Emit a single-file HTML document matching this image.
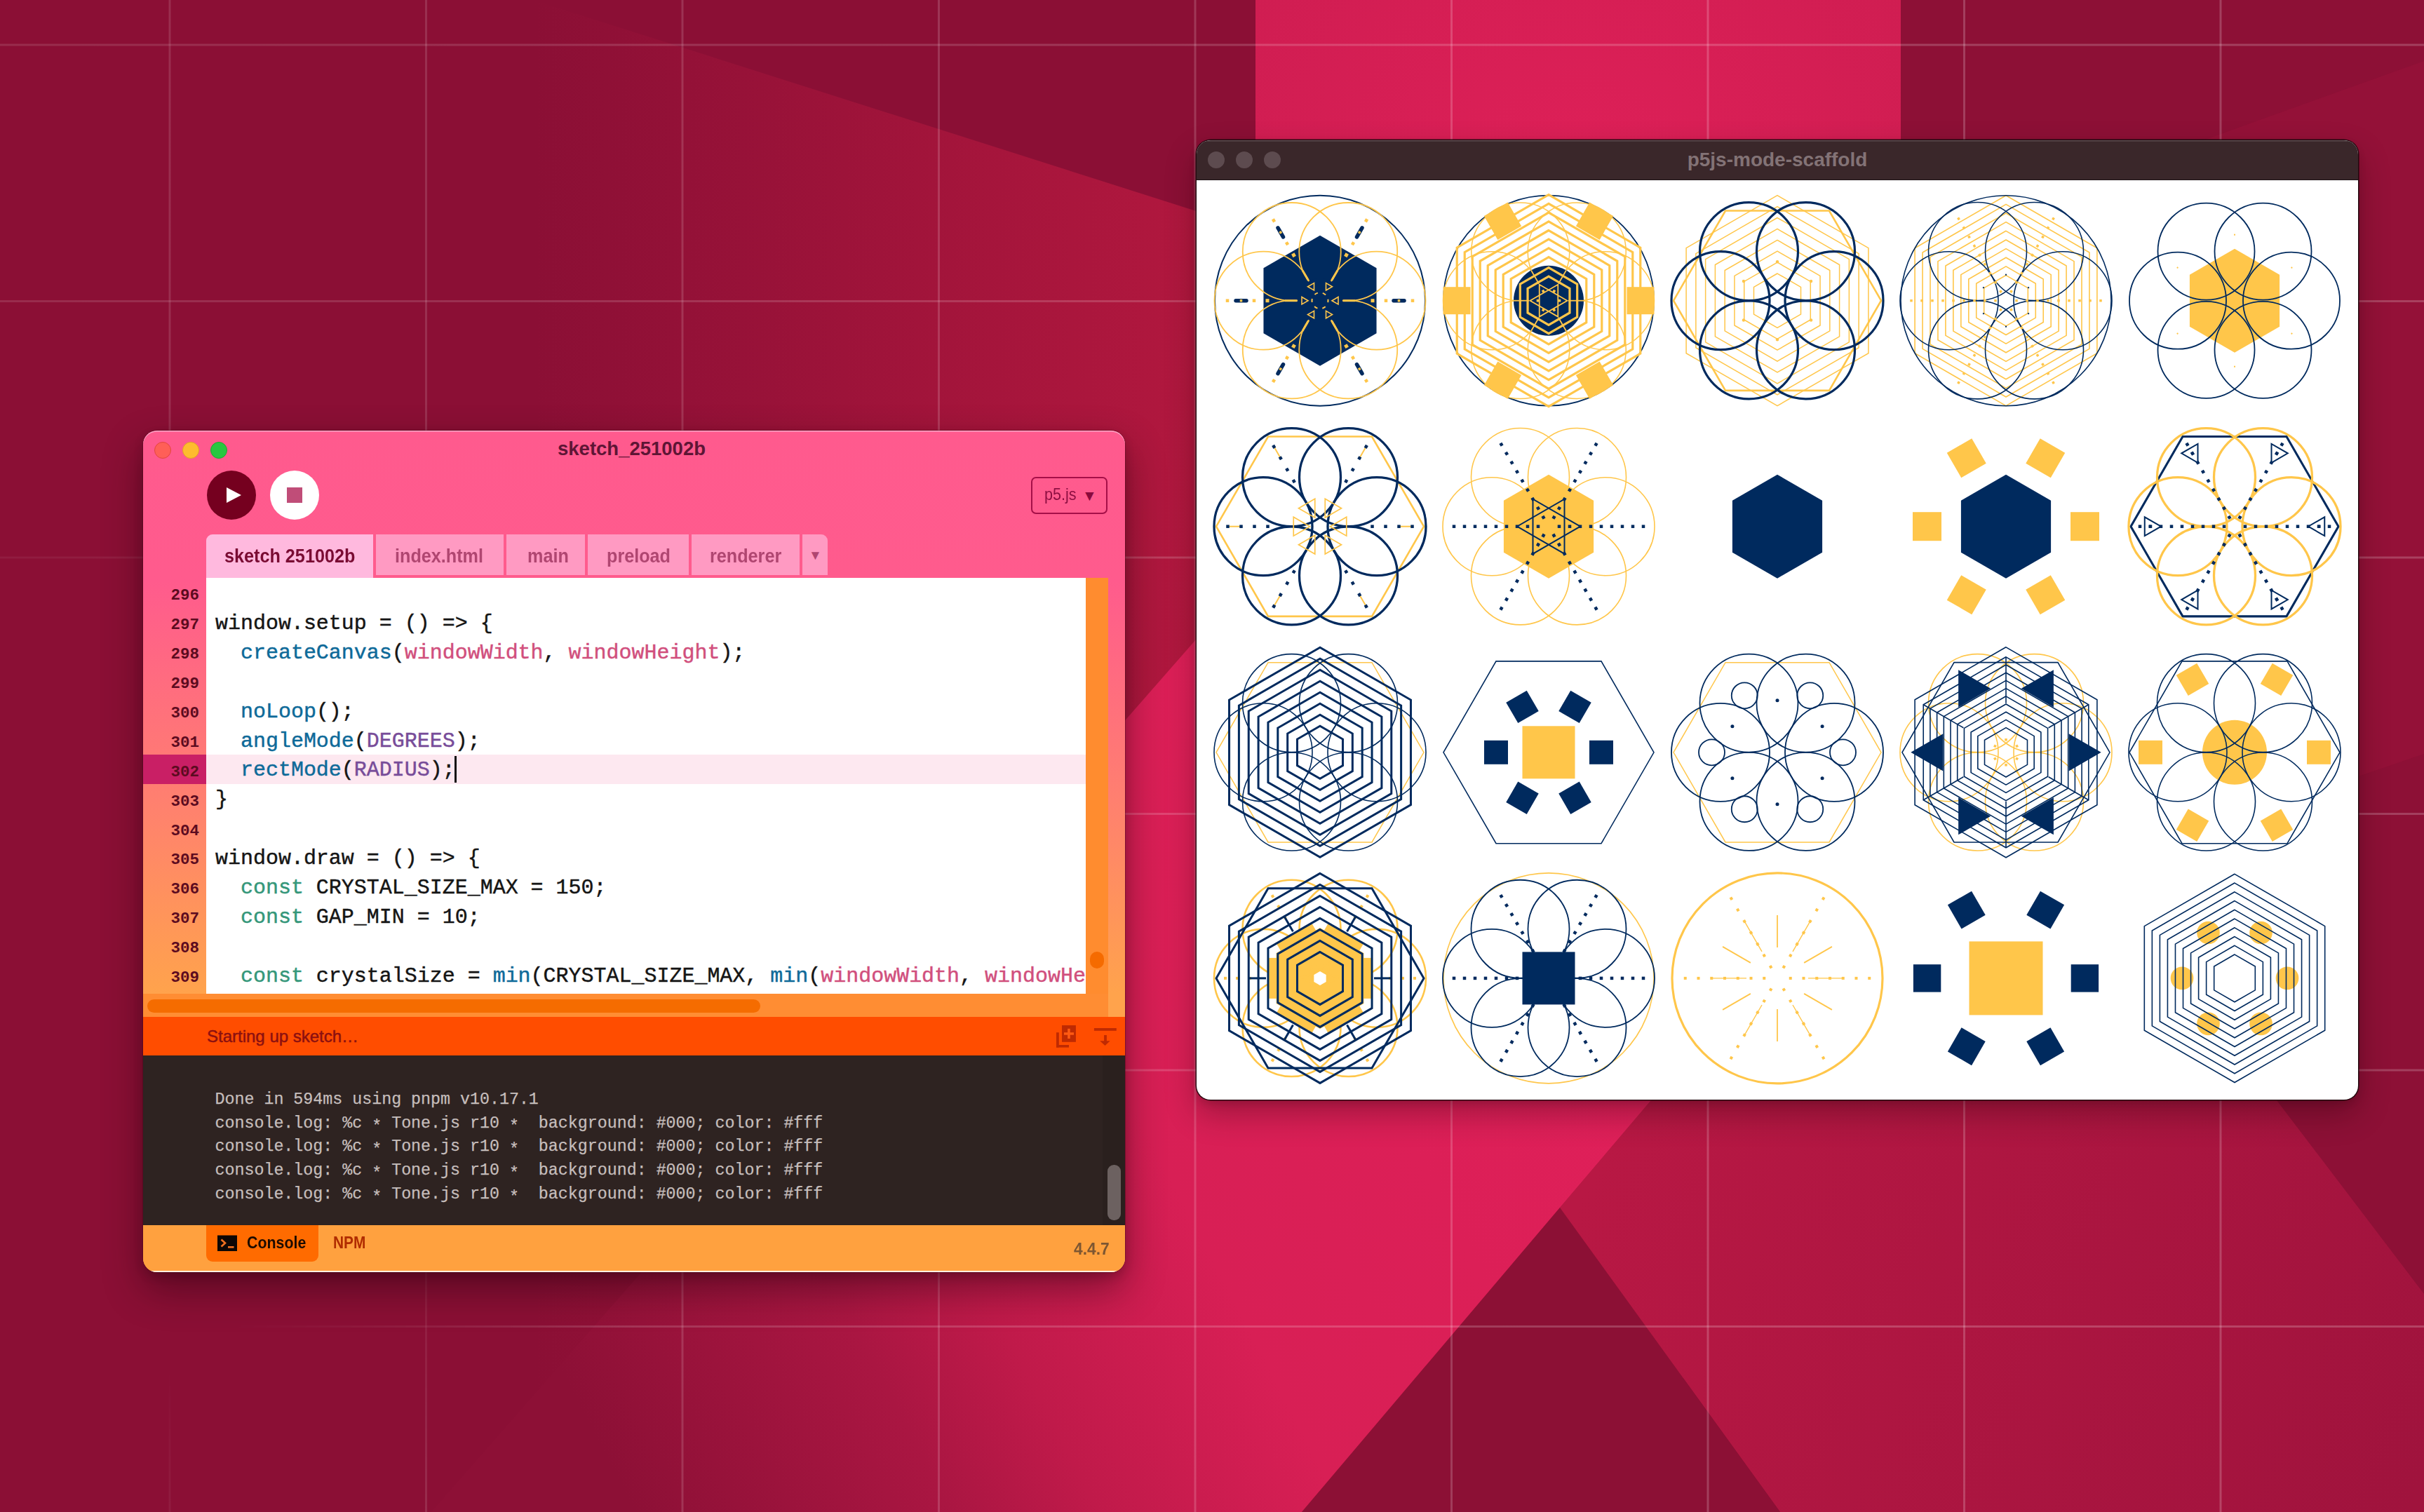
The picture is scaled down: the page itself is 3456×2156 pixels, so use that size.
<!DOCTYPE html><html><head><meta charset="utf-8"><style>
html,body{margin:0;padding:0;width:3456px;height:2156px;overflow:hidden;background:#8b0f35;}
</style></head><body>
<svg width="3456" height="2156" viewBox="0 0 3456 2156" style="position:absolute;left:0;top:0">
<defs>
<linearGradient id="gA" x1="760" y1="0" x2="1750" y2="0" gradientUnits="userSpaceOnUse">
 <stop offset="0" stop-color="#8b0f35"/><stop offset="1" stop-color="#b3183f"/></linearGradient>
<linearGradient id="gB" x1="850" y1="2050" x2="2300" y2="1300" gradientUnits="userSpaceOnUse">
 <stop offset="0" stop-color="#8d1036"/><stop offset="0.245" stop-color="#aa1642"/><stop offset="0.36" stop-color="#c01a4a"/><stop offset="0.55" stop-color="#d81f55"/><stop offset="0.75" stop-color="#dc1f57"/><stop offset="1" stop-color="#e0205a"/></linearGradient>
<radialGradient id="gTop" cx="2250" cy="260" r="750" gradientUnits="userSpaceOnUse">
 <stop offset="0" stop-color="#de2058"/><stop offset="1" stop-color="#ca1c4f"/></radialGradient>
<linearGradient id="gR" x1="2300" y1="1600" x2="3456" y2="2100" gradientUnits="userSpaceOnUse">
 <stop offset="0" stop-color="#b81844"/><stop offset="1" stop-color="#a0133d"/></linearGradient>
<linearGradient id="gmx" x1="0" y1="0" x2="2600" y2="0" gradientUnits="userSpaceOnUse"><stop offset="0" stop-color="#999"/><stop offset="1" stop-color="#fff"/></linearGradient><radialGradient id="gm" cx="0" cy="1500" r="1000" gradientUnits="userSpaceOnUse"><stop offset="0.5" stop-color="#000" stop-opacity="1"/><stop offset="0.95" stop-color="#000" stop-opacity="0"/></radialGradient><mask id="gridmask" maskUnits="userSpaceOnUse" x="0" y="0" width="3456" height="2156"><rect width="3456" height="2156" fill="url(#gmx)"/><rect width="3456" height="2156" fill="url(#gm)"/></mask>
</defs>
<rect width="3456" height="2156" fill="#8b0f35"/>
<polygon points="760,0 2400,522 2400,2156 760,2156" fill="url(#gA)"/>
<polygon points="615,2156 2329,200 3000,200 3000,1300 2354,1569 2224,1722 1856,2156" fill="url(#gB)"/>
<polygon points="1790,0 2710,0 2710,330 1790,330" fill="url(#gTop)"/>
<polygon points="2710,0 3456,0 3456,1845 3246,1569 2710,1569" fill="#8d1036"/>
<polygon points="2710,355 3456,87 3456,1075 2710,1330" fill="#941138"/>
<polygon points="2354,1569 3246,1569 3456,1845 3456,2156 2538,2156 2224,1722" fill="url(#gR)"/>
<polygon points="1856,2156 2224,1722 2538,2156" fill="#8c1035"/>
<g fill="#ffffff" fill-opacity="0.2" mask="url(#gridmask)"><rect x="240.5" y="0" width="3" height="2156"/><rect x="606.0" y="0" width="3" height="2156"/><rect x="971.5" y="0" width="3" height="2156"/><rect x="1337.0" y="0" width="3" height="2156"/><rect x="1702.5" y="0" width="3" height="2156"/><rect x="2068.0" y="0" width="3" height="2156"/><rect x="2433.5" y="0" width="3" height="2156"/><rect x="2799.0" y="0" width="3" height="2156"/><rect x="3164.5" y="0" width="3" height="2156"/><rect x="0" y="62.5" width="3456" height="3"/><rect x="0" y="428.0" width="3456" height="3"/><rect x="0" y="793.5" width="3456" height="3"/><rect x="0" y="1159.0" width="3456" height="3"/><rect x="0" y="1524.5" width="3456" height="3"/><rect x="0" y="1890.0" width="3456" height="3"/></g>
</svg>
<div style="position:absolute;left:204px;top:614px;width:1400px;height:1200px;border-radius:20px;overflow:hidden;background:linear-gradient(to bottom,#ff5a8e 0px,#ff5b8d 215px,#ff7f70 520px,#ffa34c 803px);box-shadow:inset 0 1.5px 0 rgba(255,200,225,0.7), 0 24px 55px 0px rgba(30,0,10,0.45), 0 6px 14px rgba(30,0,10,0.18), 0 0 0 1px rgba(80,10,30,0.35);">
<div style="position:absolute;left:16.0px;top:16.0px;width:24.0px;height:24.0px;background:#ff5f57;border-radius:50%;box-sizing:border-box;border:1px solid #e2463f;"></div>
<div style="position:absolute;left:56.0px;top:16.0px;width:24.0px;height:24.0px;background:#febc2e;border-radius:50%;box-sizing:border-box;border:1px solid #e0a028;"></div>
<div style="position:absolute;left:96.0px;top:16.0px;width:24.0px;height:24.0px;background:#28c840;border-radius:50%;box-sizing:border-box;border:1px solid #1eaa32;"></div>
<div style="position:absolute;left:591.0px;top:11.1px;font-family:'Liberation Sans', sans-serif;font-size:27.5px;line-height:30.72px;font-weight:bold;color:#5e1535;white-space:pre;">sketch_251002b</div>
<div style="position:absolute;left:91.0px;top:57.0px;width:70.0px;height:70.0px;background:#75001f;border-radius:50%;box-sizing:border-box;"></div>
<div style="position:absolute;left:181.0px;top:57.0px;width:70.0px;height:70.0px;background:#ffffff;border-radius:50%;box-sizing:border-box;"></div>
<svg style="position:absolute;left:0;top:0" width="300" height="150"><polygon points="119,81 140,92 119,103" fill="#fff"/><rect x="205" y="81" width="22" height="22" fill="#c04d78"/></svg>
<div style="position:absolute;left:1266.0px;top:66.0px;width:109.0px;height:53.0px;background:transparent;border:2.5px solid #a50f48;border-radius:7px;box-sizing:border-box;"></div>
<div style="position:absolute;left:1285.0px;top:78.3px;font-family:'Liberation Sans', sans-serif;font-size:24px;line-height:26.81px;font-weight:normal;color:#8e0f42;white-space:pre;transform:scaleX(0.9);transform-origin:0 0;">p5.js</div>
<div style="position:absolute;left:1339.0px;top:81.0px;font-family:'Liberation Sans', sans-serif;font-size:21px;line-height:23.46px;font-weight:normal;color:#8a0a3c;white-space:pre;">▼</div>
<div style="position:absolute;left:90.0px;top:148.0px;width:238.0px;height:62.0px;background:#ffb9de;border-top-left-radius:9px;"></div>
<div style="position:absolute;left:116.0px;top:162.7px;font-family:'Liberation Sans', sans-serif;font-size:28px;line-height:31.28px;font-weight:bold;color:#7a0b33;white-space:pre;transform:scaleX(0.9);transform-origin:0 0;">sketch 251002b</div>
<div style="position:absolute;left:332.0px;top:148.0px;width:182.0px;height:58.0px;background:#ff9ac2;"></div>
<div style="position:absolute;left:359.1px;top:162.7px;font-family:'Liberation Sans', sans-serif;font-size:28px;line-height:31.28px;font-weight:bold;color:#b04671;white-space:pre;transform:scaleX(0.9);transform-origin:0 0;">index.html</div>
<div style="position:absolute;left:518.0px;top:148.0px;width:112.0px;height:58.0px;background:#ff9ac2;"></div>
<div style="position:absolute;left:548.4px;top:162.7px;font-family:'Liberation Sans', sans-serif;font-size:28px;line-height:31.28px;font-weight:bold;color:#b04671;white-space:pre;transform:scaleX(0.9);transform-origin:0 0;">main</div>
<div style="position:absolute;left:634.0px;top:148.0px;width:144.0px;height:58.0px;background:#ff9ac2;"></div>
<div style="position:absolute;left:661.3px;top:162.7px;font-family:'Liberation Sans', sans-serif;font-size:28px;line-height:31.28px;font-weight:bold;color:#b04671;white-space:pre;transform:scaleX(0.9);transform-origin:0 0;">preload</div>
<div style="position:absolute;left:782.0px;top:148.0px;width:154.0px;height:58.0px;background:#ff9ac2;"></div>
<div style="position:absolute;left:807.9px;top:162.7px;font-family:'Liberation Sans', sans-serif;font-size:28px;line-height:31.28px;font-weight:bold;color:#b04671;white-space:pre;transform:scaleX(0.9);transform-origin:0 0;">renderer</div>
<div style="position:absolute;left:940.0px;top:148.0px;width:36.0px;height:58.0px;background:#ff9ac2;border-top-right-radius:9px;"></div>
<div style="position:absolute;left:949.0px;top:166.8px;font-family:'Liberation Sans', sans-serif;font-size:19px;line-height:21.22px;font-weight:normal;color:#b04671;white-space:pre;">▼</div>
<div style="position:absolute;left:90.0px;top:210.0px;width:1254.0px;height:593.0px;background:#ffffff;overflow:hidden;"></div>
<div style="position:absolute;left:90.0px;top:462.0px;width:1254.0px;height:42.0px;background:#fde8f0;"></div>
<div style="position:absolute;left:0.0px;top:462.0px;width:90.0px;height:42.0px;background:#c91f65;"></div>
<div style="position:absolute;left:39.5px;top:223.3px;font-family:'Liberation Mono', monospace;font-size:22.5px;line-height:25.49px;font-weight:bold;color:#5c0b20;white-space:pre;">296</div>
<div style="position:absolute;left:39.5px;top:265.2px;font-family:'Liberation Mono', monospace;font-size:22.5px;line-height:25.49px;font-weight:bold;color:#5c0b20;white-space:pre;">297</div>
<div style="position:absolute;left:39.5px;top:307.1px;font-family:'Liberation Mono', monospace;font-size:22.5px;line-height:25.49px;font-weight:bold;color:#5c0b20;white-space:pre;">298</div>
<div style="position:absolute;left:39.5px;top:349.0px;font-family:'Liberation Mono', monospace;font-size:22.5px;line-height:25.49px;font-weight:bold;color:#5c0b20;white-space:pre;">299</div>
<div style="position:absolute;left:39.5px;top:390.9px;font-family:'Liberation Mono', monospace;font-size:22.5px;line-height:25.49px;font-weight:bold;color:#5c0b20;white-space:pre;">300</div>
<div style="position:absolute;left:39.5px;top:432.8px;font-family:'Liberation Mono', monospace;font-size:22.5px;line-height:25.49px;font-weight:bold;color:#5c0b20;white-space:pre;">301</div>
<div style="position:absolute;left:39.5px;top:474.7px;font-family:'Liberation Mono', monospace;font-size:22.5px;line-height:25.49px;font-weight:bold;color:#5c0b20;white-space:pre;">302</div>
<div style="position:absolute;left:39.5px;top:516.6px;font-family:'Liberation Mono', monospace;font-size:22.5px;line-height:25.49px;font-weight:bold;color:#5c0b20;white-space:pre;">303</div>
<div style="position:absolute;left:39.5px;top:558.5px;font-family:'Liberation Mono', monospace;font-size:22.5px;line-height:25.49px;font-weight:bold;color:#5c0b20;white-space:pre;">304</div>
<div style="position:absolute;left:39.5px;top:600.4px;font-family:'Liberation Mono', monospace;font-size:22.5px;line-height:25.49px;font-weight:bold;color:#5c0b20;white-space:pre;">305</div>
<div style="position:absolute;left:39.5px;top:642.3px;font-family:'Liberation Mono', monospace;font-size:22.5px;line-height:25.49px;font-weight:bold;color:#5c0b20;white-space:pre;">306</div>
<div style="position:absolute;left:39.5px;top:684.2px;font-family:'Liberation Mono', monospace;font-size:22.5px;line-height:25.49px;font-weight:bold;color:#5c0b20;white-space:pre;">307</div>
<div style="position:absolute;left:39.5px;top:726.1px;font-family:'Liberation Mono', monospace;font-size:22.5px;line-height:25.49px;font-weight:bold;color:#5c0b20;white-space:pre;">308</div>
<div style="position:absolute;left:39.5px;top:768.0px;font-family:'Liberation Mono', monospace;font-size:22.5px;line-height:25.49px;font-weight:bold;color:#5c0b20;white-space:pre;">309</div>
<div style="position:absolute;left:90px;top:210px;width:1254px;height:593px;overflow:hidden;"><div style="position:absolute;left:13.0px;top:48.9px;font-family:'Liberation Mono', monospace;font-size:29.97px;line-height:33.95px;font-weight:normal;color:#151515;white-space:pre;-webkit-text-stroke:0.45px currentColor;">window.setup = () =&gt; {</div><div style="position:absolute;left:13.0px;top:90.8px;font-family:'Liberation Mono', monospace;font-size:29.97px;line-height:33.95px;font-weight:normal;color:#151515;white-space:pre;-webkit-text-stroke:0.45px currentColor;">  <span style="color:#0e6a99">createCanvas</span>(<span style="color:#d14f7d">windowWidth</span>, <span style="color:#d14f7d">windowHeight</span>);</div><div style="position:absolute;left:13.0px;top:174.6px;font-family:'Liberation Mono', monospace;font-size:29.97px;line-height:33.95px;font-weight:normal;color:#151515;white-space:pre;-webkit-text-stroke:0.45px currentColor;">  <span style="color:#0e6a99">noLoop</span>();</div><div style="position:absolute;left:13.0px;top:216.5px;font-family:'Liberation Mono', monospace;font-size:29.97px;line-height:33.95px;font-weight:normal;color:#151515;white-space:pre;-webkit-text-stroke:0.45px currentColor;">  <span style="color:#0e6a99">angleMode</span>(<span style="color:#784c99">DEGREES</span>);</div><div style="position:absolute;left:13.0px;top:258.4px;font-family:'Liberation Mono', monospace;font-size:29.97px;line-height:33.95px;font-weight:normal;color:#151515;white-space:pre;-webkit-text-stroke:0.45px currentColor;">  <span style="color:#0e6a99">rectMode</span>(<span style="color:#784c99">RADIUS</span>);</div><div style="position:absolute;left:13.0px;top:300.3px;font-family:'Liberation Mono', monospace;font-size:29.97px;line-height:33.95px;font-weight:normal;color:#151515;white-space:pre;-webkit-text-stroke:0.45px currentColor;">}</div><div style="position:absolute;left:13.0px;top:384.1px;font-family:'Liberation Mono', monospace;font-size:29.97px;line-height:33.95px;font-weight:normal;color:#151515;white-space:pre;-webkit-text-stroke:0.45px currentColor;">window.draw = () =&gt; {</div><div style="position:absolute;left:13.0px;top:426.0px;font-family:'Liberation Mono', monospace;font-size:29.97px;line-height:33.95px;font-weight:normal;color:#151515;white-space:pre;-webkit-text-stroke:0.45px currentColor;">  <span style="color:#35977a">const</span> CRYSTAL_SIZE_MAX = 150;</div><div style="position:absolute;left:13.0px;top:467.9px;font-family:'Liberation Mono', monospace;font-size:29.97px;line-height:33.95px;font-weight:normal;color:#151515;white-space:pre;-webkit-text-stroke:0.45px currentColor;">  <span style="color:#35977a">const</span> GAP_MIN = 10;</div><div style="position:absolute;left:13.0px;top:551.7px;font-family:'Liberation Mono', monospace;font-size:29.97px;line-height:33.95px;font-weight:normal;color:#151515;white-space:pre;-webkit-text-stroke:0.45px currentColor;">  <span style="color:#35977a">const</span> crystalSize = <span style="color:#0e6a99">min</span>(CRYSTAL_SIZE_MAX, <span style="color:#0e6a99">min</span>(<span style="color:#d14f7d">windowWidth</span>, <span style="color:#d14f7d">windowHeight</span>));</div></div>
<div style="position:absolute;left:444.0px;top:464.0px;width:2.5px;height:38.0px;background:#111;"></div>
<div style="position:absolute;left:1344.0px;top:210.0px;width:32.0px;height:593.0px;background:#ff8c2f;"></div>
<div style="position:absolute;left:1350.0px;top:743.0px;width:20.0px;height:24.0px;background:#f56b00;border-radius:10px;"></div>
<div style="position:absolute;left:0.0px;top:803.0px;width:1376.0px;height:33.0px;background:#ff8d33;"></div>
<div style="position:absolute;left:6.0px;top:811.0px;width:874.0px;height:19.0px;background:#f56c00;border-radius:10px;"></div>
<div style="position:absolute;left:0.0px;top:836.0px;width:1400.0px;height:55.0px;background:#ff4d00;"></div>
<div style="position:absolute;left:91.0px;top:851.3px;font-family:'Liberation Sans', sans-serif;font-size:24px;line-height:26.81px;font-weight:normal;color:#8c1010;white-space:pre;-webkit-text-stroke:0.5px #8c1010;">Starting up sketch…</div>
<svg style="position:absolute;left:1294px;top:846px" width="100" height="40"><g fill="#bf2a02"><rect x="8" y="12.2" width="3.8" height="21.4"/><rect x="8" y="30" width="18" height="3.6"/><rect x="16" y="2" width="19.9" height="23.8"/><rect x="61.9" y="6" width="31.9" height="3.8"/><rect x="76.1" y="16" width="3.8" height="9.6"/><polygon points="70.2,24.2 84.7,24.2 77.5,31"/></g><rect x="19" y="12.2" width="14" height="3.5" fill="#ff5a12"/><rect x="24.2" y="6.8" width="3.5" height="14.2" fill="#ff5a12"/></svg>
<div style="position:absolute;left:0.0px;top:891.0px;width:1400.0px;height:242.0px;background:#2e2321;"></div>
<div style="position:absolute;left:1368.0px;top:891.0px;width:32.0px;height:242.0px;background:#2a201e;"></div>
<div style="position:absolute;left:102.5px;top:940.6px;font-family:'Liberation Mono', monospace;font-size:23.3px;line-height:26.39px;font-weight:normal;color:#c6bebc;white-space:pre;-webkit-text-stroke:0.25px #c6bebc;">Done in 594ms using pnpm v10.17.1</div>
<div style="position:absolute;left:102.5px;top:974.5px;font-family:'Liberation Mono', monospace;font-size:23.3px;line-height:26.39px;font-weight:normal;color:#c6bebc;white-space:pre;-webkit-text-stroke:0.25px #c6bebc;">console.log: %c <span style="position:relative;top:5px">*</span> Tone.js r10 <span style="position:relative;top:5px">*</span>  background: #000; color: #fff</div>
<div style="position:absolute;left:102.5px;top:1008.3px;font-family:'Liberation Mono', monospace;font-size:23.3px;line-height:26.39px;font-weight:normal;color:#c6bebc;white-space:pre;-webkit-text-stroke:0.25px #c6bebc;">console.log: %c <span style="position:relative;top:5px">*</span> Tone.js r10 <span style="position:relative;top:5px">*</span>  background: #000; color: #fff</div>
<div style="position:absolute;left:102.5px;top:1042.2px;font-family:'Liberation Mono', monospace;font-size:23.3px;line-height:26.39px;font-weight:normal;color:#c6bebc;white-space:pre;-webkit-text-stroke:0.25px #c6bebc;">console.log: %c <span style="position:relative;top:5px">*</span> Tone.js r10 <span style="position:relative;top:5px">*</span>  background: #000; color: #fff</div>
<div style="position:absolute;left:102.5px;top:1076.0px;font-family:'Liberation Mono', monospace;font-size:23.3px;line-height:26.39px;font-weight:normal;color:#c6bebc;white-space:pre;-webkit-text-stroke:0.25px #c6bebc;">console.log: %c <span style="position:relative;top:5px">*</span> Tone.js r10 <span style="position:relative;top:5px">*</span>  background: #000; color: #fff</div>
<div style="position:absolute;left:1375.0px;top:1047.0px;width:18.5px;height:79.0px;background:#6c6160;border-radius:9px;"></div>
<div style="position:absolute;left:0.0px;top:1133.0px;width:1400.0px;height:67.0px;background:#ffa13f;"></div>
<div style="position:absolute;left:90.0px;top:1133.0px;width:160.0px;height:52.0px;background:#ff6b00;border-bottom-left-radius:9px;border-bottom-right-radius:9px;"></div>
<svg style="position:absolute;left:106px;top:1147px" width="30" height="26"><rect x="0" y="0.5" width="28" height="22.5" fill="#0d0705"/><path d="M5.5 6.5 l5.5 5 l-5.5 5" fill="none" stroke="#f07020" stroke-width="2.6"/><rect x="15" y="16" width="8.5" height="2.6" fill="#f07020"/></svg>
<div style="position:absolute;left:148.0px;top:1145.3px;font-family:'Liberation Sans', sans-serif;font-size:24px;line-height:26.81px;font-weight:bold;color:#1c0b00;white-space:pre;transform:scaleX(0.89);transform-origin:0 0;">Console</div>
<div style="position:absolute;left:270.5px;top:1145.3px;font-family:'Liberation Sans', sans-serif;font-size:24px;line-height:26.81px;font-weight:bold;color:#b02c00;white-space:pre;transform:scaleX(0.87);transform-origin:0 0;">NPM</div>
<div style="position:absolute;left:1327.0px;top:1154.3px;font-family:'Liberation Sans', sans-serif;font-size:24px;line-height:26.81px;font-weight:bold;color:#7d5632;white-space:pre;transform:scaleX(0.95);transform-origin:0 0;">4.4.7</div>
<div style="position:absolute;left:0.0px;top:1197.5px;width:1400.0px;height:2.5px;background:rgba(255,245,235,0.95);"></div>
</div>
<div style="position:absolute;left:1706px;top:200px;width:1656px;height:1368px;border-radius:20px;overflow:hidden;background:#ffffff;box-shadow:0 20px 45px 0px rgba(30,0,10,0.32), 0 5px 12px rgba(30,0,10,0.15), 0 0 0 1.5px rgba(20,10,12,0.85);">
<div style="position:absolute;left:0;top:0;width:1656px;height:57px;background:#3a272a;border-bottom:1.5px solid #1e1416;box-sizing:border-box;box-shadow:inset 0 1.5px 0 rgba(255,255,255,0.18);"></div>
<div style="position:absolute;left:16px;top:16px;width:24px;height:24px;border-radius:50%;background:#5d4b4f;"></div>
<div style="position:absolute;left:56px;top:16px;width:24px;height:24px;border-radius:50%;background:#5d4b4f;"></div>
<div style="position:absolute;left:96px;top:16px;width:24px;height:24px;border-radius:50%;background:#5d4b4f;"></div>
<div style="position:absolute;left:0;top:0;width:1656px;text-align:center;font-family:&quot;Liberation Sans&quot;,sans-serif;font-weight:bold;font-size:28px;line-height:31.3px;color:#837376;padding-top:12px;">p5js-mode-scaffold</div>
<svg style="position:absolute;left:0;top:0" width="1656" height="1368" viewBox="1706 200 1656 1368">
<circle cx="1882" cy="428.7" r="150" fill="none" stroke="#002a5e" stroke-width="2"/>
<polygon points="1882,335.7 1801.46,382.2 1801.46,475.2 1882,521.7 1962.54,475.2 1962.54,382.2" fill="#002a5e"/>
<circle cx="1962.5" cy="428.7" r="70" fill="none" stroke="#ffc64a" stroke-width="1.8"/><circle cx="1922.25" cy="358.98" r="70" fill="none" stroke="#ffc64a" stroke-width="1.8"/><circle cx="1841.75" cy="358.98" r="70" fill="none" stroke="#ffc64a" stroke-width="1.8"/><circle cx="1801.5" cy="428.7" r="70" fill="none" stroke="#ffc64a" stroke-width="1.8"/><circle cx="1841.75" cy="498.42" r="70" fill="none" stroke="#ffc64a" stroke-width="1.8"/><circle cx="1922.25" cy="498.42" r="70" fill="none" stroke="#ffc64a" stroke-width="1.8"/>
<rect x="1973.75" y="426.45" width="4.5" height="4.5" fill="#ffc64a" transform="rotate(-0 1976 428.7)"/><rect x="2011.75" y="426.45" width="4.5" height="4.5" fill="#ffc64a" transform="rotate(-0 2014 428.7)"/><rect x="1926.75" y="345.04" width="4.5" height="4.5" fill="#ffc64a" transform="rotate(-60 1929 347.29)"/><rect x="1945.75" y="312.13" width="4.5" height="4.5" fill="#ffc64a" transform="rotate(-60 1948 314.38)"/><rect x="1832.75" y="345.04" width="4.5" height="4.5" fill="#ffc64a" transform="rotate(-120 1835 347.29)"/><rect x="1813.75" y="312.13" width="4.5" height="4.5" fill="#ffc64a" transform="rotate(-120 1816 314.38)"/><rect x="1785.75" y="426.45" width="4.5" height="4.5" fill="#ffc64a" transform="rotate(-180 1788 428.7)"/><rect x="1747.75" y="426.45" width="4.5" height="4.5" fill="#ffc64a" transform="rotate(-180 1750 428.7)"/><rect x="1832.75" y="507.86" width="4.5" height="4.5" fill="#ffc64a" transform="rotate(-240 1835 510.11)"/><rect x="1813.75" y="540.77" width="4.5" height="4.5" fill="#ffc64a" transform="rotate(-240 1816 543.02)"/><rect x="1926.75" y="507.86" width="4.5" height="4.5" fill="#ffc64a" transform="rotate(-300 1929 510.11)"/><rect x="1945.75" y="540.77" width="4.5" height="4.5" fill="#ffc64a" transform="rotate(-300 1948 543.02)"/>
<line x1="1987" y1="428.7" x2="2002" y2="428.7" stroke="#002a5e" stroke-width="5.5" stroke-linecap="round"/><line x1="1934.5" y1="337.77" x2="1942" y2="324.78" stroke="#002a5e" stroke-width="5.5" stroke-linecap="round"/><line x1="1829.5" y1="337.77" x2="1822" y2="324.78" stroke="#002a5e" stroke-width="5.5" stroke-linecap="round"/><line x1="1777" y1="428.7" x2="1762" y2="428.7" stroke="#002a5e" stroke-width="5.5" stroke-linecap="round"/><line x1="1829.5" y1="519.63" x2="1822" y2="532.62" stroke="#002a5e" stroke-width="5.5" stroke-linecap="round"/><line x1="1934.5" y1="519.63" x2="1942" y2="532.62" stroke="#002a5e" stroke-width="5.5" stroke-linecap="round"/>
<rect x="1992.75" y="426.95" width="3.5" height="3.5" fill="#ffc64a" transform="rotate(-0 1994.5 428.7)"/><rect x="1936.5" y="329.52" width="3.5" height="3.5" fill="#ffc64a" transform="rotate(-60 1938.25 331.27)"/><rect x="1824" y="329.52" width="3.5" height="3.5" fill="#ffc64a" transform="rotate(-120 1825.75 331.27)"/><rect x="1767.75" y="426.95" width="3.5" height="3.5" fill="#ffc64a" transform="rotate(-180 1769.5 428.7)"/><rect x="1824" y="524.38" width="3.5" height="3.5" fill="#ffc64a" transform="rotate(-240 1825.75 526.13)"/><rect x="1936.5" y="524.38" width="3.5" height="3.5" fill="#ffc64a" transform="rotate(-300 1938.25 526.13)"/>
<rect x="1954.5" y="426.2" width="5" height="5" fill="#ffc64a" transform="rotate(-0 1957 428.7)"/><rect x="1917" y="361.25" width="5" height="5" fill="#ffc64a" transform="rotate(-60 1919.5 363.75)"/><rect x="1842" y="361.25" width="5" height="5" fill="#ffc64a" transform="rotate(-120 1844.5 363.75)"/><rect x="1804.5" y="426.2" width="5" height="5" fill="#ffc64a" transform="rotate(-180 1807 428.7)"/><rect x="1842" y="491.15" width="5" height="5" fill="#ffc64a" transform="rotate(-240 1844.5 493.65)"/><rect x="1917" y="491.15" width="5" height="5" fill="#ffc64a" transform="rotate(-300 1919.5 493.65)"/>
<line x1="1915" y1="428.7" x2="1932" y2="428.7" stroke="#ffc64a" stroke-width="3" stroke-linecap="butt"/><line x1="1898.5" y1="400.12" x2="1907" y2="385.4" stroke="#ffc64a" stroke-width="3" stroke-linecap="butt"/><line x1="1865.5" y1="400.12" x2="1857" y2="385.4" stroke="#ffc64a" stroke-width="3" stroke-linecap="butt"/><line x1="1849" y1="428.7" x2="1832" y2="428.7" stroke="#ffc64a" stroke-width="3" stroke-linecap="butt"/><line x1="1865.5" y1="457.28" x2="1857" y2="472" stroke="#ffc64a" stroke-width="3" stroke-linecap="butt"/><line x1="1898.5" y1="457.28" x2="1907" y2="472" stroke="#ffc64a" stroke-width="3" stroke-linecap="butt"/>
<circle cx="1882" cy="428.7" r="32" fill="#002a5e"/>
<polygon points="1899,428.7 1908,433.9 1908,423.5" fill="none" stroke="#ffc64a" stroke-width="1.6" stroke-linejoin="miter"/><polygon points="1890.5,413.98 1899.5,408.78 1890.5,403.59" fill="none" stroke="#ffc64a" stroke-width="1.6" stroke-linejoin="miter"/><polygon points="1873.5,413.98 1873.5,403.59 1864.5,408.78" fill="none" stroke="#ffc64a" stroke-width="1.6" stroke-linejoin="miter"/><polygon points="1865,428.7 1856,423.5 1856,433.9" fill="none" stroke="#ffc64a" stroke-width="1.6" stroke-linejoin="miter"/><polygon points="1873.5,443.42 1864.5,448.62 1873.5,453.81" fill="none" stroke="#ffc64a" stroke-width="1.6" stroke-linejoin="miter"/><polygon points="1890.5,443.42 1890.5,453.81 1899.5,448.62" fill="none" stroke="#ffc64a" stroke-width="1.6" stroke-linejoin="miter"/>
<circle cx="1882" cy="428.7" r="11.5" fill="none" stroke="#ffc64a" stroke-width="2" stroke-dasharray="5 7.04" stroke-dashoffset="2.5"/>
<circle cx="2208" cy="428.7" r="150" fill="none" stroke="#002a5e" stroke-width="1.8"/>
<circle cx="2288.5" cy="428.7" r="70" fill="none" stroke="#ffc64a" stroke-width="1.5"/><circle cx="2248.25" cy="358.98" r="70" fill="none" stroke="#ffc64a" stroke-width="1.5"/><circle cx="2167.75" cy="358.98" r="70" fill="none" stroke="#ffc64a" stroke-width="1.5"/><circle cx="2127.5" cy="428.7" r="70" fill="none" stroke="#ffc64a" stroke-width="1.5"/><circle cx="2167.75" cy="498.42" r="70" fill="none" stroke="#ffc64a" stroke-width="1.5"/><circle cx="2248.25" cy="498.42" r="70" fill="none" stroke="#ffc64a" stroke-width="1.5"/>
<polygon points="2208,277.7 2077.23,353.2 2077.23,504.2 2208,579.7 2338.77,504.2 2338.77,353.2" fill="none" stroke="#ffc64a" stroke-width="3.2" stroke-linejoin="miter"/>
<polygon points="2208,290.4 2088.23,359.55 2088.23,497.85 2208,567 2327.77,497.85 2327.77,359.55" fill="none" stroke="#ffc64a" stroke-width="3.2" stroke-linejoin="miter"/>
<polygon points="2208,303.1 2099.23,365.9 2099.23,491.5 2208,554.3 2316.77,491.5 2316.77,365.9" fill="none" stroke="#ffc64a" stroke-width="3.2" stroke-linejoin="miter"/>
<polygon points="2208,315.8 2110.23,372.25 2110.23,485.15 2208,541.6 2305.77,485.15 2305.77,372.25" fill="none" stroke="#ffc64a" stroke-width="3.2" stroke-linejoin="miter"/>
<polygon points="2208,328.5 2121.22,378.6 2121.22,478.8 2208,528.9 2294.78,478.8 2294.78,378.6" fill="none" stroke="#ffc64a" stroke-width="3.2" stroke-linejoin="miter"/>
<polygon points="2208,341.2 2132.22,384.95 2132.22,472.45 2208,516.2 2283.78,472.45 2283.78,384.95" fill="none" stroke="#ffc64a" stroke-width="3.2" stroke-linejoin="miter"/>
<polygon points="2208,353.9 2143.22,391.3 2143.22,466.1 2208,503.5 2272.78,466.1 2272.78,391.3" fill="none" stroke="#ffc64a" stroke-width="3.2" stroke-linejoin="miter"/>
<polygon points="2208,366.6 2154.22,397.65 2154.22,459.75 2208,490.8 2261.78,459.75 2261.78,397.65" fill="none" stroke="#ffc64a" stroke-width="3.2" stroke-linejoin="miter"/>
<circle cx="2208" cy="428.7" r="50" fill="#002a5e"/>
<line x1="2236" y1="428.7" x2="2258" y2="428.7" stroke="#ffc64a" stroke-width="1.8" stroke-linecap="butt"/><line x1="2222" y1="404.45" x2="2233" y2="385.4" stroke="#ffc64a" stroke-width="1.8" stroke-linecap="butt"/><line x1="2194" y1="404.45" x2="2183" y2="385.4" stroke="#ffc64a" stroke-width="1.8" stroke-linecap="butt"/><line x1="2180" y1="428.7" x2="2158" y2="428.7" stroke="#ffc64a" stroke-width="1.8" stroke-linecap="butt"/><line x1="2194" y1="452.95" x2="2183" y2="472" stroke="#ffc64a" stroke-width="1.8" stroke-linecap="butt"/><line x1="2222" y1="452.95" x2="2233" y2="472" stroke="#ffc64a" stroke-width="1.8" stroke-linecap="butt"/>
<polygon points="2208,381.7 2167.3,405.2 2167.3,452.2 2208,475.7 2248.7,452.2 2248.7,405.2" fill="none" stroke="#ffc64a" stroke-width="3.2" stroke-linejoin="miter"/>
<polygon points="2208,394.1 2178.04,411.4 2178.04,446 2208,463.3 2237.96,446 2237.96,411.4" fill="none" stroke="#ffc64a" stroke-width="3.2" stroke-linejoin="miter"/>
<polygon points="2234.5,428.7 2194.75,405.75 2194.75,451.65" fill="none" stroke="#ffc64a" stroke-width="1.8" stroke-linejoin="miter"/>
<polygon points="2181.5,428.7 2221.25,451.65 2221.25,405.75" fill="none" stroke="#ffc64a" stroke-width="1.8" stroke-linejoin="miter"/>
<rect x="2221.7" y="426.9" width="3.6" height="3.6" fill="#ffc64a" transform="rotate(-0 2223.5 428.7)"/><rect x="2213.95" y="413.48" width="3.6" height="3.6" fill="#ffc64a" transform="rotate(-60 2215.75 415.28)"/><rect x="2198.45" y="413.48" width="3.6" height="3.6" fill="#ffc64a" transform="rotate(-120 2200.25 415.28)"/><rect x="2190.7" y="426.9" width="3.6" height="3.6" fill="#ffc64a" transform="rotate(-180 2192.5 428.7)"/><rect x="2198.45" y="440.32" width="3.6" height="3.6" fill="#ffc64a" transform="rotate(-240 2200.25 442.12)"/><rect x="2213.95" y="440.32" width="3.6" height="3.6" fill="#ffc64a" transform="rotate(-300 2215.75 442.12)"/>
<rect x="2319.5" y="409.2" width="39" height="39" fill="#ffc64a" transform="rotate(0 2339 428.7)"/><rect x="2254" y="295.75" width="39" height="39" fill="#ffc64a" transform="rotate(-60 2273.5 315.25)"/><rect x="2123" y="295.75" width="39" height="39" fill="#ffc64a" transform="rotate(-120 2142.5 315.25)"/><rect x="2057.5" y="409.2" width="39" height="39" fill="#ffc64a" transform="rotate(-180 2077 428.7)"/><rect x="2123" y="522.65" width="39" height="39" fill="#ffc64a" transform="rotate(-240 2142.5 542.15)"/><rect x="2254" y="522.65" width="39" height="39" fill="#ffc64a" transform="rotate(-300 2273.5 542.15)"/>
<polygon points="2534,278.7 2404.1,353.7 2404.1,503.7 2534,578.7 2663.9,503.7 2663.9,353.7" fill="none" stroke="#ffc64a" stroke-width="1.5" stroke-linejoin="miter"/>
<polygon points="2534,294.6 2417.87,361.65 2417.87,495.75 2534,562.8 2650.13,495.75 2650.13,361.65" fill="none" stroke="#ffc64a" stroke-width="1.5" stroke-linejoin="miter"/>
<polygon points="2534,310.5 2431.64,369.6 2431.64,487.8 2534,546.9 2636.36,487.8 2636.36,369.6" fill="none" stroke="#ffc64a" stroke-width="1.5" stroke-linejoin="miter"/>
<polygon points="2534,326.4 2445.41,377.55 2445.41,479.85 2534,531 2622.59,479.85 2622.59,377.55" fill="none" stroke="#ffc64a" stroke-width="1.5" stroke-linejoin="miter"/>
<polygon points="2534,342.3 2459.18,385.5 2459.18,471.9 2534,515.1 2608.82,471.9 2608.82,385.5" fill="none" stroke="#ffc64a" stroke-width="1.5" stroke-linejoin="miter"/>
<polygon points="2534,358.2 2472.95,393.45 2472.95,463.95 2534,499.2 2595.05,463.95 2595.05,393.45" fill="none" stroke="#ffc64a" stroke-width="1.5" stroke-linejoin="miter"/>
<polygon points="2534,374.1 2486.72,401.4 2486.72,456 2534,483.3 2581.28,456 2581.28,401.4" fill="none" stroke="#ffc64a" stroke-width="1.5" stroke-linejoin="miter"/>
<polygon points="2534,390 2500.48,409.35 2500.48,448.05 2534,467.4 2567.52,448.05 2567.52,409.35" fill="none" stroke="#ffc64a" stroke-width="1.5" stroke-linejoin="miter"/>
<polygon points="2682,428.7 2608,300.53 2460,300.53 2386,428.7 2460,556.87 2608,556.87" fill="none" stroke="#ffc64a" stroke-width="2.6" stroke-linejoin="miter"/>
<circle cx="2615" cy="428.7" r="70" fill="none" stroke="#002a5e" stroke-width="3.2"/><circle cx="2574.5" cy="358.55" r="70" fill="none" stroke="#002a5e" stroke-width="3.2"/><circle cx="2493.5" cy="358.55" r="70" fill="none" stroke="#002a5e" stroke-width="3.2"/><circle cx="2453" cy="428.7" r="70" fill="none" stroke="#002a5e" stroke-width="3.2"/><circle cx="2493.5" cy="498.85" r="70" fill="none" stroke="#002a5e" stroke-width="3.2"/><circle cx="2574.5" cy="498.85" r="70" fill="none" stroke="#002a5e" stroke-width="3.2"/>
<circle cx="2582.06" cy="400.95" r="2.2" fill="#ffc64a"/><circle cx="2534" cy="373.2" r="2.2" fill="#ffc64a"/><circle cx="2485.94" cy="400.95" r="2.2" fill="#ffc64a"/><circle cx="2485.94" cy="456.45" r="2.2" fill="#ffc64a"/><circle cx="2534" cy="484.2" r="2.2" fill="#ffc64a"/><circle cx="2582.06" cy="456.45" r="2.2" fill="#ffc64a"/>
<polygon points="2860,278.7 2730.1,353.7 2730.1,503.7 2860,578.7 2989.9,503.7 2989.9,353.7" fill="none" stroke="#ffc64a" stroke-width="1.6" stroke-linejoin="miter"/>
<polygon points="2860,291.35 2741.05,360.02 2741.05,497.38 2860,566.05 2978.95,497.38 2978.95,360.02" fill="none" stroke="#ffc64a" stroke-width="1.6" stroke-linejoin="miter"/>
<polygon points="2860,304 2752.01,366.35 2752.01,491.05 2860,553.4 2967.99,491.05 2967.99,366.35" fill="none" stroke="#ffc64a" stroke-width="1.6" stroke-linejoin="miter"/>
<polygon points="2860,316.65 2762.96,372.68 2762.96,484.73 2860,540.75 2957.04,484.73 2957.04,372.68" fill="none" stroke="#ffc64a" stroke-width="1.6" stroke-linejoin="miter"/>
<polygon points="2860,329.3 2773.92,379 2773.92,478.4 2860,528.1 2946.08,478.4 2946.08,379" fill="none" stroke="#ffc64a" stroke-width="1.6" stroke-linejoin="miter"/>
<polygon points="2860,341.95 2784.87,385.32 2784.87,472.07 2860,515.45 2935.13,472.08 2935.13,385.32" fill="none" stroke="#ffc64a" stroke-width="1.6" stroke-linejoin="miter"/>
<polygon points="2860,354.6 2795.83,391.65 2795.83,465.75 2860,502.8 2924.17,465.75 2924.17,391.65" fill="none" stroke="#ffc64a" stroke-width="1.6" stroke-linejoin="miter"/>
<polygon points="2860,367.25 2806.78,397.97 2806.78,459.43 2860,490.15 2913.22,459.43 2913.22,397.97" fill="none" stroke="#ffc64a" stroke-width="1.6" stroke-linejoin="miter"/>
<polygon points="2860,379.9 2817.74,404.3 2817.74,453.1 2860,477.5 2902.26,453.1 2902.26,404.3" fill="none" stroke="#ffc64a" stroke-width="1.6" stroke-linejoin="miter"/>
<polygon points="2860,392.55 2828.69,410.62 2828.69,446.77 2860,464.85 2891.31,446.77 2891.31,410.62" fill="none" stroke="#ffc64a" stroke-width="1.6" stroke-linejoin="miter"/>
<circle cx="2860" cy="428.7" r="150" fill="none" stroke="#002a5e" stroke-width="1.6"/>
<circle cx="2941" cy="428.7" r="70" fill="none" stroke="#002a5e" stroke-width="1.6"/><circle cx="2900.5" cy="358.55" r="70" fill="none" stroke="#002a5e" stroke-width="1.6"/><circle cx="2819.5" cy="358.55" r="70" fill="none" stroke="#002a5e" stroke-width="1.6"/><circle cx="2779" cy="428.7" r="70" fill="none" stroke="#002a5e" stroke-width="1.6"/><circle cx="2819.5" cy="498.85" r="70" fill="none" stroke="#002a5e" stroke-width="1.6"/><circle cx="2900.5" cy="498.85" r="70" fill="none" stroke="#002a5e" stroke-width="1.6"/>
<rect x="2888.25" y="426.95" width="3.5" height="3.5" fill="#ffc64a" transform="rotate(-0 2890 428.7)"/><rect x="2903.25" y="426.95" width="3.5" height="3.5" fill="#ffc64a" transform="rotate(-0 2905 428.7)"/><rect x="2918.25" y="426.95" width="3.5" height="3.5" fill="#ffc64a" transform="rotate(-0 2920 428.7)"/><rect x="2933.25" y="426.95" width="3.5" height="3.5" fill="#ffc64a" transform="rotate(-0 2935 428.7)"/><rect x="2948.25" y="426.95" width="3.5" height="3.5" fill="#ffc64a" transform="rotate(-0 2950 428.7)"/><rect x="2963.25" y="426.95" width="3.5" height="3.5" fill="#ffc64a" transform="rotate(-0 2965 428.7)"/><rect x="2978.25" y="426.95" width="3.5" height="3.5" fill="#ffc64a" transform="rotate(-0 2980 428.7)"/><rect x="2993.25" y="426.95" width="3.5" height="3.5" fill="#ffc64a" transform="rotate(-0 2995 428.7)"/><rect x="2873.25" y="400.97" width="3.5" height="3.5" fill="#ffc64a" transform="rotate(-60 2875 402.72)"/><rect x="2880.75" y="387.98" width="3.5" height="3.5" fill="#ffc64a" transform="rotate(-60 2882.5 389.73)"/><rect x="2888.25" y="374.99" width="3.5" height="3.5" fill="#ffc64a" transform="rotate(-60 2890 376.74)"/><rect x="2895.75" y="362" width="3.5" height="3.5" fill="#ffc64a" transform="rotate(-60 2897.5 363.75)"/><rect x="2903.25" y="349.01" width="3.5" height="3.5" fill="#ffc64a" transform="rotate(-60 2905 350.76)"/><rect x="2910.75" y="336.02" width="3.5" height="3.5" fill="#ffc64a" transform="rotate(-60 2912.5 337.77)"/><rect x="2918.25" y="323.03" width="3.5" height="3.5" fill="#ffc64a" transform="rotate(-60 2920 324.78)"/><rect x="2925.75" y="310.04" width="3.5" height="3.5" fill="#ffc64a" transform="rotate(-60 2927.5 311.79)"/><rect x="2843.25" y="400.97" width="3.5" height="3.5" fill="#ffc64a" transform="rotate(-120 2845 402.72)"/><rect x="2835.75" y="387.98" width="3.5" height="3.5" fill="#ffc64a" transform="rotate(-120 2837.5 389.73)"/><rect x="2828.25" y="374.99" width="3.5" height="3.5" fill="#ffc64a" transform="rotate(-120 2830 376.74)"/><rect x="2820.75" y="362" width="3.5" height="3.5" fill="#ffc64a" transform="rotate(-120 2822.5 363.75)"/><rect x="2813.25" y="349.01" width="3.5" height="3.5" fill="#ffc64a" transform="rotate(-120 2815 350.76)"/><rect x="2805.75" y="336.02" width="3.5" height="3.5" fill="#ffc64a" transform="rotate(-120 2807.5 337.77)"/><rect x="2798.25" y="323.03" width="3.5" height="3.5" fill="#ffc64a" transform="rotate(-120 2800 324.78)"/><rect x="2790.75" y="310.04" width="3.5" height="3.5" fill="#ffc64a" transform="rotate(-120 2792.5 311.79)"/><rect x="2828.25" y="426.95" width="3.5" height="3.5" fill="#ffc64a" transform="rotate(-180 2830 428.7)"/><rect x="2813.25" y="426.95" width="3.5" height="3.5" fill="#ffc64a" transform="rotate(-180 2815 428.7)"/><rect x="2798.25" y="426.95" width="3.5" height="3.5" fill="#ffc64a" transform="rotate(-180 2800 428.7)"/><rect x="2783.25" y="426.95" width="3.5" height="3.5" fill="#ffc64a" transform="rotate(-180 2785 428.7)"/><rect x="2768.25" y="426.95" width="3.5" height="3.5" fill="#ffc64a" transform="rotate(-180 2770 428.7)"/><rect x="2753.25" y="426.95" width="3.5" height="3.5" fill="#ffc64a" transform="rotate(-180 2755 428.7)"/><rect x="2738.25" y="426.95" width="3.5" height="3.5" fill="#ffc64a" transform="rotate(-180 2740 428.7)"/><rect x="2723.25" y="426.95" width="3.5" height="3.5" fill="#ffc64a" transform="rotate(-180 2725 428.7)"/><rect x="2843.25" y="452.93" width="3.5" height="3.5" fill="#ffc64a" transform="rotate(-240 2845 454.68)"/><rect x="2835.75" y="465.92" width="3.5" height="3.5" fill="#ffc64a" transform="rotate(-240 2837.5 467.67)"/><rect x="2828.25" y="478.91" width="3.5" height="3.5" fill="#ffc64a" transform="rotate(-240 2830 480.66)"/><rect x="2820.75" y="491.9" width="3.5" height="3.5" fill="#ffc64a" transform="rotate(-240 2822.5 493.65)"/><rect x="2813.25" y="504.89" width="3.5" height="3.5" fill="#ffc64a" transform="rotate(-240 2815 506.64)"/><rect x="2805.75" y="517.88" width="3.5" height="3.5" fill="#ffc64a" transform="rotate(-240 2807.5 519.63)"/><rect x="2798.25" y="530.87" width="3.5" height="3.5" fill="#ffc64a" transform="rotate(-240 2800 532.62)"/><rect x="2790.75" y="543.86" width="3.5" height="3.5" fill="#ffc64a" transform="rotate(-240 2792.5 545.61)"/><rect x="2873.25" y="452.93" width="3.5" height="3.5" fill="#ffc64a" transform="rotate(-300 2875 454.68)"/><rect x="2880.75" y="465.92" width="3.5" height="3.5" fill="#ffc64a" transform="rotate(-300 2882.5 467.67)"/><rect x="2888.25" y="478.91" width="3.5" height="3.5" fill="#ffc64a" transform="rotate(-300 2890 480.66)"/><rect x="2895.75" y="491.9" width="3.5" height="3.5" fill="#ffc64a" transform="rotate(-300 2897.5 493.65)"/><rect x="2903.25" y="504.89" width="3.5" height="3.5" fill="#ffc64a" transform="rotate(-300 2905 506.64)"/><rect x="2910.75" y="517.88" width="3.5" height="3.5" fill="#ffc64a" transform="rotate(-300 2912.5 519.63)"/><rect x="2918.25" y="530.87" width="3.5" height="3.5" fill="#ffc64a" transform="rotate(-300 2920 532.62)"/><rect x="2925.75" y="543.86" width="3.5" height="3.5" fill="#ffc64a" transform="rotate(-300 2927.5 545.61)"/>
<rect x="2891.04" y="409.2" width="2" height="2" fill="#002a5e" transform="rotate(-30 2892.04 410.2)"/><rect x="2859" y="390.7" width="2" height="2" fill="#002a5e" transform="rotate(-90 2860 391.7)"/><rect x="2826.96" y="409.2" width="2" height="2" fill="#002a5e" transform="rotate(-150 2827.96 410.2)"/><rect x="2826.96" y="446.2" width="2" height="2" fill="#002a5e" transform="rotate(-210 2827.96 447.2)"/><rect x="2859" y="464.7" width="2" height="2" fill="#002a5e" transform="rotate(-270 2860 465.7)"/><rect x="2891.04" y="446.2" width="2" height="2" fill="#002a5e" transform="rotate(-330 2892.04 447.2)"/>
<rect x="2873.25" y="426.95" width="3.5" height="3.5" fill="#ffc64a" transform="rotate(-0 2875 428.7)"/><rect x="2865.75" y="413.96" width="3.5" height="3.5" fill="#ffc64a" transform="rotate(-60 2867.5 415.71)"/><rect x="2850.75" y="413.96" width="3.5" height="3.5" fill="#ffc64a" transform="rotate(-120 2852.5 415.71)"/><rect x="2843.25" y="426.95" width="3.5" height="3.5" fill="#ffc64a" transform="rotate(-180 2845 428.7)"/><rect x="2850.75" y="439.94" width="3.5" height="3.5" fill="#ffc64a" transform="rotate(-240 2852.5 441.69)"/><rect x="2865.75" y="439.94" width="3.5" height="3.5" fill="#ffc64a" transform="rotate(-300 2867.5 441.69)"/>
<polygon points="3186,354.7 3121.91,391.7 3121.91,465.7 3186,502.7 3250.09,465.7 3250.09,391.7" fill="#ffc64a"/>
<circle cx="3267" cy="428.7" r="69" fill="none" stroke="#002a5e" stroke-width="1.8"/><circle cx="3226.5" cy="358.55" r="69" fill="none" stroke="#002a5e" stroke-width="1.8"/><circle cx="3145.5" cy="358.55" r="69" fill="none" stroke="#002a5e" stroke-width="1.8"/><circle cx="3105" cy="428.7" r="69" fill="none" stroke="#002a5e" stroke-width="1.8"/><circle cx="3145.5" cy="498.85" r="69" fill="none" stroke="#002a5e" stroke-width="1.8"/><circle cx="3226.5" cy="498.85" r="69" fill="none" stroke="#002a5e" stroke-width="1.8"/>
<rect x="3266.41" y="380.7" width="2" height="2" fill="#ffc64a" transform="rotate(-30 3267.41 381.7)"/><rect x="3185" y="333.7" width="2" height="2" fill="#ffc64a" transform="rotate(-90 3186 334.7)"/><rect x="3103.59" y="380.7" width="2" height="2" fill="#ffc64a" transform="rotate(-150 3104.59 381.7)"/><rect x="3103.59" y="474.7" width="2" height="2" fill="#ffc64a" transform="rotate(-210 3104.59 475.7)"/><rect x="3185" y="521.7" width="2" height="2" fill="#ffc64a" transform="rotate(-270 3186 522.7)"/><rect x="3266.41" y="474.7" width="2" height="2" fill="#ffc64a" transform="rotate(-330 3267.41 475.7)"/>
<polygon points="2030,750.7 1956,622.53 1808,622.53 1734,750.7 1808,878.87 1956,878.87" fill="none" stroke="#ffc64a" stroke-width="2.6" stroke-linejoin="miter"/>
<line x1="1994.5" y1="750.7" x2="2013.5" y2="750.7" stroke="#ffc64a" stroke-width="2" stroke-linecap="butt"/><line x1="1938.25" y1="653.27" x2="1947.75" y2="636.82" stroke="#ffc64a" stroke-width="2" stroke-linecap="butt"/><line x1="1825.75" y1="653.27" x2="1816.25" y2="636.82" stroke="#ffc64a" stroke-width="2" stroke-linecap="butt"/><line x1="1769.5" y1="750.7" x2="1750.5" y2="750.7" stroke="#ffc64a" stroke-width="2" stroke-linecap="butt"/><line x1="1825.75" y1="848.13" x2="1816.25" y2="864.58" stroke="#ffc64a" stroke-width="2" stroke-linecap="butt"/><line x1="1938.25" y1="848.13" x2="1947.75" y2="864.58" stroke="#ffc64a" stroke-width="2" stroke-linecap="butt"/>
<rect x="1954.25" y="748.45" width="4.5" height="4.5" fill="#002a5e" transform="rotate(-0 1956.5 750.7)"/><rect x="1973.25" y="748.45" width="4.5" height="4.5" fill="#002a5e" transform="rotate(-0 1975.5 750.7)"/><rect x="1992.25" y="748.45" width="4.5" height="4.5" fill="#002a5e" transform="rotate(-0 1994.5 750.7)"/><rect x="2011.25" y="748.45" width="4.5" height="4.5" fill="#002a5e" transform="rotate(-0 2013.5 750.7)"/><rect x="1917" y="683.93" width="4.5" height="4.5" fill="#002a5e" transform="rotate(-60 1919.25 686.18)"/><rect x="1926.5" y="667.48" width="4.5" height="4.5" fill="#002a5e" transform="rotate(-60 1928.75 669.73)"/><rect x="1936" y="651.02" width="4.5" height="4.5" fill="#002a5e" transform="rotate(-60 1938.25 653.27)"/><rect x="1945.5" y="634.57" width="4.5" height="4.5" fill="#002a5e" transform="rotate(-60 1947.75 636.82)"/><rect x="1842.5" y="683.93" width="4.5" height="4.5" fill="#002a5e" transform="rotate(-120 1844.75 686.18)"/><rect x="1833" y="667.48" width="4.5" height="4.5" fill="#002a5e" transform="rotate(-120 1835.25 669.73)"/><rect x="1823.5" y="651.02" width="4.5" height="4.5" fill="#002a5e" transform="rotate(-120 1825.75 653.27)"/><rect x="1814" y="634.57" width="4.5" height="4.5" fill="#002a5e" transform="rotate(-120 1816.25 636.82)"/><rect x="1805.25" y="748.45" width="4.5" height="4.5" fill="#002a5e" transform="rotate(-180 1807.5 750.7)"/><rect x="1786.25" y="748.45" width="4.5" height="4.5" fill="#002a5e" transform="rotate(-180 1788.5 750.7)"/><rect x="1767.25" y="748.45" width="4.5" height="4.5" fill="#002a5e" transform="rotate(-180 1769.5 750.7)"/><rect x="1748.25" y="748.45" width="4.5" height="4.5" fill="#002a5e" transform="rotate(-180 1750.5 750.7)"/><rect x="1842.5" y="812.97" width="4.5" height="4.5" fill="#002a5e" transform="rotate(-240 1844.75 815.22)"/><rect x="1833" y="829.42" width="4.5" height="4.5" fill="#002a5e" transform="rotate(-240 1835.25 831.67)"/><rect x="1823.5" y="845.88" width="4.5" height="4.5" fill="#002a5e" transform="rotate(-240 1825.75 848.13)"/><rect x="1814" y="862.33" width="4.5" height="4.5" fill="#002a5e" transform="rotate(-240 1816.25 864.58)"/><rect x="1917" y="812.97" width="4.5" height="4.5" fill="#002a5e" transform="rotate(-300 1919.25 815.22)"/><rect x="1926.5" y="829.42" width="4.5" height="4.5" fill="#002a5e" transform="rotate(-300 1928.75 831.67)"/><rect x="1936" y="845.88" width="4.5" height="4.5" fill="#002a5e" transform="rotate(-300 1938.25 848.13)"/><rect x="1945.5" y="862.33" width="4.5" height="4.5" fill="#002a5e" transform="rotate(-300 1947.75 864.58)"/>
<circle cx="1963" cy="750.7" r="70" fill="none" stroke="#002a5e" stroke-width="3.3"/><circle cx="1922.5" cy="680.55" r="70" fill="none" stroke="#002a5e" stroke-width="3.3"/><circle cx="1841.5" cy="680.55" r="70" fill="none" stroke="#002a5e" stroke-width="3.3"/><circle cx="1801" cy="750.7" r="70" fill="none" stroke="#002a5e" stroke-width="3.3"/><circle cx="1841.5" cy="820.85" r="70" fill="none" stroke="#002a5e" stroke-width="3.3"/><circle cx="1922.5" cy="820.85" r="70" fill="none" stroke="#002a5e" stroke-width="3.3"/>
<polygon points="1896.5,750.7 1919.75,764.12 1919.75,737.28" fill="none" stroke="#ffc64a" stroke-width="1.7" stroke-linejoin="miter"/><polygon points="1889.25,738.14 1912.5,724.72 1889.25,711.3" fill="none" stroke="#ffc64a" stroke-width="1.7" stroke-linejoin="miter"/><polygon points="1874.75,738.14 1874.75,711.3 1851.5,724.72" fill="none" stroke="#ffc64a" stroke-width="1.7" stroke-linejoin="miter"/><polygon points="1867.5,750.7 1844.25,737.28 1844.25,764.12" fill="none" stroke="#ffc64a" stroke-width="1.7" stroke-linejoin="miter"/><polygon points="1874.75,763.26 1851.5,776.68 1874.75,790.1" fill="none" stroke="#ffc64a" stroke-width="1.7" stroke-linejoin="miter"/><polygon points="1889.25,763.26 1889.25,790.1 1912.5,776.68" fill="none" stroke="#ffc64a" stroke-width="1.7" stroke-linejoin="miter"/>
<polygon points="2208,676.7 2143.91,713.7 2143.91,787.7 2208,824.7 2272.09,787.7 2272.09,713.7" fill="#ffc64a"/>
<circle cx="2289" cy="750.7" r="70" fill="none" stroke="#ffc64a" stroke-width="1.6"/><circle cx="2248.5" cy="680.55" r="70" fill="none" stroke="#ffc64a" stroke-width="1.6"/><circle cx="2167.5" cy="680.55" r="70" fill="none" stroke="#ffc64a" stroke-width="1.6"/><circle cx="2127" cy="750.7" r="70" fill="none" stroke="#ffc64a" stroke-width="1.6"/><circle cx="2167.5" cy="820.85" r="70" fill="none" stroke="#ffc64a" stroke-width="1.6"/><circle cx="2248.5" cy="820.85" r="70" fill="none" stroke="#ffc64a" stroke-width="1.6"/>
<polygon points="2253,750.7 2185.5,711.73 2185.5,789.67" fill="none" stroke="#002a5e" stroke-width="2" stroke-linejoin="miter"/>
<polygon points="2163,750.7 2230.5,789.67 2230.5,711.73" fill="none" stroke="#002a5e" stroke-width="2" stroke-linejoin="miter"/>
<rect x="2220.75" y="748.45" width="4.5" height="4.5" fill="#002a5e" transform="rotate(-0 2223 750.7)"/><rect x="2235.75" y="748.45" width="4.5" height="4.5" fill="#002a5e" transform="rotate(-0 2238 750.7)"/><rect x="2250.75" y="748.45" width="4.5" height="4.5" fill="#002a5e" transform="rotate(-0 2253 750.7)"/><rect x="2265.75" y="748.45" width="4.5" height="4.5" fill="#002a5e" transform="rotate(-0 2268 750.7)"/><rect x="2280.75" y="748.45" width="4.5" height="4.5" fill="#002a5e" transform="rotate(-0 2283 750.7)"/><rect x="2295.75" y="748.45" width="4.5" height="4.5" fill="#002a5e" transform="rotate(-0 2298 750.7)"/><rect x="2310.75" y="748.45" width="4.5" height="4.5" fill="#002a5e" transform="rotate(-0 2313 750.7)"/><rect x="2325.75" y="748.45" width="4.5" height="4.5" fill="#002a5e" transform="rotate(-0 2328 750.7)"/><rect x="2340.75" y="748.45" width="4.5" height="4.5" fill="#002a5e" transform="rotate(-0 2343 750.7)"/><rect x="2213.25" y="735.46" width="4.5" height="4.5" fill="#002a5e" transform="rotate(-60 2215.5 737.71)"/><rect x="2220.75" y="722.47" width="4.5" height="4.5" fill="#002a5e" transform="rotate(-60 2223 724.72)"/><rect x="2228.25" y="709.48" width="4.5" height="4.5" fill="#002a5e" transform="rotate(-60 2230.5 711.73)"/><rect x="2235.75" y="696.49" width="4.5" height="4.5" fill="#002a5e" transform="rotate(-60 2238 698.74)"/><rect x="2243.25" y="683.5" width="4.5" height="4.5" fill="#002a5e" transform="rotate(-60 2245.5 685.75)"/><rect x="2250.75" y="670.51" width="4.5" height="4.5" fill="#002a5e" transform="rotate(-60 2253 672.76)"/><rect x="2258.25" y="657.52" width="4.5" height="4.5" fill="#002a5e" transform="rotate(-60 2260.5 659.77)"/><rect x="2265.75" y="644.53" width="4.5" height="4.5" fill="#002a5e" transform="rotate(-60 2268 646.78)"/><rect x="2273.25" y="631.54" width="4.5" height="4.5" fill="#002a5e" transform="rotate(-60 2275.5 633.79)"/><rect x="2198.25" y="735.46" width="4.5" height="4.5" fill="#002a5e" transform="rotate(-120 2200.5 737.71)"/><rect x="2190.75" y="722.47" width="4.5" height="4.5" fill="#002a5e" transform="rotate(-120 2193 724.72)"/><rect x="2183.25" y="709.48" width="4.5" height="4.5" fill="#002a5e" transform="rotate(-120 2185.5 711.73)"/><rect x="2175.75" y="696.49" width="4.5" height="4.5" fill="#002a5e" transform="rotate(-120 2178 698.74)"/><rect x="2168.25" y="683.5" width="4.5" height="4.5" fill="#002a5e" transform="rotate(-120 2170.5 685.75)"/><rect x="2160.75" y="670.51" width="4.5" height="4.5" fill="#002a5e" transform="rotate(-120 2163 672.76)"/><rect x="2153.25" y="657.52" width="4.5" height="4.5" fill="#002a5e" transform="rotate(-120 2155.5 659.77)"/><rect x="2145.75" y="644.53" width="4.5" height="4.5" fill="#002a5e" transform="rotate(-120 2148 646.78)"/><rect x="2138.25" y="631.54" width="4.5" height="4.5" fill="#002a5e" transform="rotate(-120 2140.5 633.79)"/><rect x="2190.75" y="748.45" width="4.5" height="4.5" fill="#002a5e" transform="rotate(-180 2193 750.7)"/><rect x="2175.75" y="748.45" width="4.5" height="4.5" fill="#002a5e" transform="rotate(-180 2178 750.7)"/><rect x="2160.75" y="748.45" width="4.5" height="4.5" fill="#002a5e" transform="rotate(-180 2163 750.7)"/><rect x="2145.75" y="748.45" width="4.5" height="4.5" fill="#002a5e" transform="rotate(-180 2148 750.7)"/><rect x="2130.75" y="748.45" width="4.5" height="4.5" fill="#002a5e" transform="rotate(-180 2133 750.7)"/><rect x="2115.75" y="748.45" width="4.5" height="4.5" fill="#002a5e" transform="rotate(-180 2118 750.7)"/><rect x="2100.75" y="748.45" width="4.5" height="4.5" fill="#002a5e" transform="rotate(-180 2103 750.7)"/><rect x="2085.75" y="748.45" width="4.5" height="4.5" fill="#002a5e" transform="rotate(-180 2088 750.7)"/><rect x="2070.75" y="748.45" width="4.5" height="4.5" fill="#002a5e" transform="rotate(-180 2073 750.7)"/><rect x="2198.25" y="761.44" width="4.5" height="4.5" fill="#002a5e" transform="rotate(-240 2200.5 763.69)"/><rect x="2190.75" y="774.43" width="4.5" height="4.5" fill="#002a5e" transform="rotate(-240 2193 776.68)"/><rect x="2183.25" y="787.42" width="4.5" height="4.5" fill="#002a5e" transform="rotate(-240 2185.5 789.67)"/><rect x="2175.75" y="800.41" width="4.5" height="4.5" fill="#002a5e" transform="rotate(-240 2178 802.66)"/><rect x="2168.25" y="813.4" width="4.5" height="4.5" fill="#002a5e" transform="rotate(-240 2170.5 815.65)"/><rect x="2160.75" y="826.39" width="4.5" height="4.5" fill="#002a5e" transform="rotate(-240 2163 828.64)"/><rect x="2153.25" y="839.38" width="4.5" height="4.5" fill="#002a5e" transform="rotate(-240 2155.5 841.63)"/><rect x="2145.75" y="852.37" width="4.5" height="4.5" fill="#002a5e" transform="rotate(-240 2148 854.62)"/><rect x="2138.25" y="865.36" width="4.5" height="4.5" fill="#002a5e" transform="rotate(-240 2140.5 867.61)"/><rect x="2213.25" y="761.44" width="4.5" height="4.5" fill="#002a5e" transform="rotate(-300 2215.5 763.69)"/><rect x="2220.75" y="774.43" width="4.5" height="4.5" fill="#002a5e" transform="rotate(-300 2223 776.68)"/><rect x="2228.25" y="787.42" width="4.5" height="4.5" fill="#002a5e" transform="rotate(-300 2230.5 789.67)"/><rect x="2235.75" y="800.41" width="4.5" height="4.5" fill="#002a5e" transform="rotate(-300 2238 802.66)"/><rect x="2243.25" y="813.4" width="4.5" height="4.5" fill="#002a5e" transform="rotate(-300 2245.5 815.65)"/><rect x="2250.75" y="826.39" width="4.5" height="4.5" fill="#002a5e" transform="rotate(-300 2253 828.64)"/><rect x="2258.25" y="839.38" width="4.5" height="4.5" fill="#002a5e" transform="rotate(-300 2260.5 841.63)"/><rect x="2265.75" y="852.37" width="4.5" height="4.5" fill="#002a5e" transform="rotate(-300 2268 854.62)"/><rect x="2273.25" y="865.36" width="4.5" height="4.5" fill="#002a5e" transform="rotate(-300 2275.5 867.61)"/>
<polygon points="2534,676.7 2469.91,713.7 2469.91,787.7 2534,824.7 2598.09,787.7 2598.09,713.7" fill="#002a5e"/>
<polygon points="2860,676.7 2795.91,713.7 2795.91,787.7 2860,824.7 2924.09,787.7 2924.09,713.7" fill="#002a5e"/>
<rect x="2952" y="730.2" width="41" height="41" fill="#ffc64a" transform="rotate(0 2972.5 750.7)"/><rect x="2895.75" y="632.77" width="41" height="41" fill="#ffc64a" transform="rotate(-60 2916.25 653.27)"/><rect x="2783.25" y="632.77" width="41" height="41" fill="#ffc64a" transform="rotate(-120 2803.75 653.27)"/><rect x="2727" y="730.2" width="41" height="41" fill="#ffc64a" transform="rotate(-180 2747.5 750.7)"/><rect x="2783.25" y="827.63" width="41" height="41" fill="#ffc64a" transform="rotate(-240 2803.75 848.13)"/><rect x="2895.75" y="827.63" width="41" height="41" fill="#ffc64a" transform="rotate(-300 2916.25 848.13)"/>
<polygon points="3334,750.7 3260,622.53 3112,622.53 3038,750.7 3112,878.87 3260,878.87" fill="none" stroke="#002a5e" stroke-width="3.1" stroke-linejoin="miter"/>
<circle cx="3267" cy="750.7" r="70" fill="none" stroke="#ffc64a" stroke-width="3.3"/><circle cx="3226.5" cy="680.55" r="70" fill="none" stroke="#ffc64a" stroke-width="3.3"/><circle cx="3145.5" cy="680.55" r="70" fill="none" stroke="#ffc64a" stroke-width="3.3"/><circle cx="3105" cy="750.7" r="70" fill="none" stroke="#ffc64a" stroke-width="3.3"/><circle cx="3145.5" cy="820.85" r="70" fill="none" stroke="#ffc64a" stroke-width="3.3"/><circle cx="3226.5" cy="820.85" r="70" fill="none" stroke="#ffc64a" stroke-width="3.3"/>
<rect x="3198.75" y="748.45" width="4.5" height="4.5" fill="#002a5e" transform="rotate(-0 3201 750.7)"/><rect x="3213.75" y="748.45" width="4.5" height="4.5" fill="#002a5e" transform="rotate(-0 3216 750.7)"/><rect x="3228.75" y="748.45" width="4.5" height="4.5" fill="#002a5e" transform="rotate(-0 3231 750.7)"/><rect x="3243.75" y="748.45" width="4.5" height="4.5" fill="#002a5e" transform="rotate(-0 3246 750.7)"/><rect x="3258.75" y="748.45" width="4.5" height="4.5" fill="#002a5e" transform="rotate(-0 3261 750.7)"/><rect x="3273.75" y="748.45" width="4.5" height="4.5" fill="#002a5e" transform="rotate(-0 3276 750.7)"/><rect x="3288.75" y="748.45" width="4.5" height="4.5" fill="#002a5e" transform="rotate(-0 3291 750.7)"/><rect x="3303.75" y="748.45" width="4.5" height="4.5" fill="#002a5e" transform="rotate(-0 3306 750.7)"/><rect x="3318.75" y="748.45" width="4.5" height="4.5" fill="#002a5e" transform="rotate(-0 3321 750.7)"/><rect x="3191.25" y="735.46" width="4.5" height="4.5" fill="#002a5e" transform="rotate(-60 3193.5 737.71)"/><rect x="3198.75" y="722.47" width="4.5" height="4.5" fill="#002a5e" transform="rotate(-60 3201 724.72)"/><rect x="3206.25" y="709.48" width="4.5" height="4.5" fill="#002a5e" transform="rotate(-60 3208.5 711.73)"/><rect x="3213.75" y="696.49" width="4.5" height="4.5" fill="#002a5e" transform="rotate(-60 3216 698.74)"/><rect x="3221.25" y="683.5" width="4.5" height="4.5" fill="#002a5e" transform="rotate(-60 3223.5 685.75)"/><rect x="3228.75" y="670.51" width="4.5" height="4.5" fill="#002a5e" transform="rotate(-60 3231 672.76)"/><rect x="3236.25" y="657.52" width="4.5" height="4.5" fill="#002a5e" transform="rotate(-60 3238.5 659.77)"/><rect x="3243.75" y="644.53" width="4.5" height="4.5" fill="#002a5e" transform="rotate(-60 3246 646.78)"/><rect x="3251.25" y="631.54" width="4.5" height="4.5" fill="#002a5e" transform="rotate(-60 3253.5 633.79)"/><rect x="3176.25" y="735.46" width="4.5" height="4.5" fill="#002a5e" transform="rotate(-120 3178.5 737.71)"/><rect x="3168.75" y="722.47" width="4.5" height="4.5" fill="#002a5e" transform="rotate(-120 3171 724.72)"/><rect x="3161.25" y="709.48" width="4.5" height="4.5" fill="#002a5e" transform="rotate(-120 3163.5 711.73)"/><rect x="3153.75" y="696.49" width="4.5" height="4.5" fill="#002a5e" transform="rotate(-120 3156 698.74)"/><rect x="3146.25" y="683.5" width="4.5" height="4.5" fill="#002a5e" transform="rotate(-120 3148.5 685.75)"/><rect x="3138.75" y="670.51" width="4.5" height="4.5" fill="#002a5e" transform="rotate(-120 3141 672.76)"/><rect x="3131.25" y="657.52" width="4.5" height="4.5" fill="#002a5e" transform="rotate(-120 3133.5 659.77)"/><rect x="3123.75" y="644.53" width="4.5" height="4.5" fill="#002a5e" transform="rotate(-120 3126 646.78)"/><rect x="3116.25" y="631.54" width="4.5" height="4.5" fill="#002a5e" transform="rotate(-120 3118.5 633.79)"/><rect x="3168.75" y="748.45" width="4.5" height="4.5" fill="#002a5e" transform="rotate(-180 3171 750.7)"/><rect x="3153.75" y="748.45" width="4.5" height="4.5" fill="#002a5e" transform="rotate(-180 3156 750.7)"/><rect x="3138.75" y="748.45" width="4.5" height="4.5" fill="#002a5e" transform="rotate(-180 3141 750.7)"/><rect x="3123.75" y="748.45" width="4.5" height="4.5" fill="#002a5e" transform="rotate(-180 3126 750.7)"/><rect x="3108.75" y="748.45" width="4.5" height="4.5" fill="#002a5e" transform="rotate(-180 3111 750.7)"/><rect x="3093.75" y="748.45" width="4.5" height="4.5" fill="#002a5e" transform="rotate(-180 3096 750.7)"/><rect x="3078.75" y="748.45" width="4.5" height="4.5" fill="#002a5e" transform="rotate(-180 3081 750.7)"/><rect x="3063.75" y="748.45" width="4.5" height="4.5" fill="#002a5e" transform="rotate(-180 3066 750.7)"/><rect x="3048.75" y="748.45" width="4.5" height="4.5" fill="#002a5e" transform="rotate(-180 3051 750.7)"/><rect x="3176.25" y="761.44" width="4.5" height="4.5" fill="#002a5e" transform="rotate(-240 3178.5 763.69)"/><rect x="3168.75" y="774.43" width="4.5" height="4.5" fill="#002a5e" transform="rotate(-240 3171 776.68)"/><rect x="3161.25" y="787.42" width="4.5" height="4.5" fill="#002a5e" transform="rotate(-240 3163.5 789.67)"/><rect x="3153.75" y="800.41" width="4.5" height="4.5" fill="#002a5e" transform="rotate(-240 3156 802.66)"/><rect x="3146.25" y="813.4" width="4.5" height="4.5" fill="#002a5e" transform="rotate(-240 3148.5 815.65)"/><rect x="3138.75" y="826.39" width="4.5" height="4.5" fill="#002a5e" transform="rotate(-240 3141 828.64)"/><rect x="3131.25" y="839.38" width="4.5" height="4.5" fill="#002a5e" transform="rotate(-240 3133.5 841.63)"/><rect x="3123.75" y="852.37" width="4.5" height="4.5" fill="#002a5e" transform="rotate(-240 3126 854.62)"/><rect x="3116.25" y="865.36" width="4.5" height="4.5" fill="#002a5e" transform="rotate(-240 3118.5 867.61)"/><rect x="3191.25" y="761.44" width="4.5" height="4.5" fill="#002a5e" transform="rotate(-300 3193.5 763.69)"/><rect x="3198.75" y="774.43" width="4.5" height="4.5" fill="#002a5e" transform="rotate(-300 3201 776.68)"/><rect x="3206.25" y="787.42" width="4.5" height="4.5" fill="#002a5e" transform="rotate(-300 3208.5 789.67)"/><rect x="3213.75" y="800.41" width="4.5" height="4.5" fill="#002a5e" transform="rotate(-300 3216 802.66)"/><rect x="3221.25" y="813.4" width="4.5" height="4.5" fill="#002a5e" transform="rotate(-300 3223.5 815.65)"/><rect x="3228.75" y="826.39" width="4.5" height="4.5" fill="#002a5e" transform="rotate(-300 3231 828.64)"/><rect x="3236.25" y="839.38" width="4.5" height="4.5" fill="#002a5e" transform="rotate(-300 3238.5 841.63)"/><rect x="3243.75" y="852.37" width="4.5" height="4.5" fill="#002a5e" transform="rotate(-300 3246 854.62)"/><rect x="3251.25" y="865.36" width="4.5" height="4.5" fill="#002a5e" transform="rotate(-300 3253.5 867.61)"/>
<polygon points="3291,750.7 3314.25,764.12 3314.25,737.28" fill="none" stroke="#002a5e" stroke-width="2" stroke-linejoin="miter"/><rect x="3304.5" y="748.7" width="4" height="4" fill="#002a5e" transform="rotate(0 3306.5 750.7)"/><polygon points="3238.5,659.77 3261.75,646.34 3238.5,632.92" fill="none" stroke="#002a5e" stroke-width="2" stroke-linejoin="miter"/><rect x="3244.25" y="644.34" width="4" height="4" fill="#002a5e" transform="rotate(-60 3246.25 646.34)"/><polygon points="3133.5,659.77 3133.5,632.92 3110.25,646.34" fill="none" stroke="#002a5e" stroke-width="2" stroke-linejoin="miter"/><rect x="3123.75" y="644.34" width="4" height="4" fill="#002a5e" transform="rotate(-120 3125.75 646.34)"/><polygon points="3081,750.7 3057.75,737.28 3057.75,764.12" fill="none" stroke="#002a5e" stroke-width="2" stroke-linejoin="miter"/><rect x="3063.5" y="748.7" width="4" height="4" fill="#002a5e" transform="rotate(-180 3065.5 750.7)"/><polygon points="3133.5,841.63 3110.25,855.06 3133.5,868.48" fill="none" stroke="#002a5e" stroke-width="2" stroke-linejoin="miter"/><rect x="3123.75" y="853.06" width="4" height="4" fill="#002a5e" transform="rotate(-240 3125.75 855.06)"/><polygon points="3238.5,841.63 3238.5,868.48 3261.75,855.06" fill="none" stroke="#002a5e" stroke-width="2" stroke-linejoin="miter"/><rect x="3244.25" y="853.06" width="4" height="4" fill="#002a5e" transform="rotate(-300 3246.25 855.06)"/>
<polygon points="2030,1072.8 1956,944.63 1808,944.63 1734,1072.8 1808,1200.97 1956,1200.97" fill="none" stroke="#ffc64a" stroke-width="1.5" stroke-linejoin="miter"/>
<circle cx="1963" cy="1072.8" r="70" fill="none" stroke="#002a5e" stroke-width="1.6"/><circle cx="1922.5" cy="1002.65" r="70" fill="none" stroke="#002a5e" stroke-width="1.6"/><circle cx="1841.5" cy="1002.65" r="70" fill="none" stroke="#002a5e" stroke-width="1.6"/><circle cx="1801" cy="1072.8" r="70" fill="none" stroke="#002a5e" stroke-width="1.6"/><circle cx="1841.5" cy="1142.95" r="70" fill="none" stroke="#002a5e" stroke-width="1.6"/><circle cx="1922.5" cy="1142.95" r="70" fill="none" stroke="#002a5e" stroke-width="1.6"/>
<polygon points="1882,923.3 1752.53,998.05 1752.53,1147.55 1882,1222.3 2011.47,1147.55 2011.47,998.05" fill="none" stroke="#002a5e" stroke-width="3" stroke-linejoin="miter"/>
<polygon points="1882,939.3 1766.39,1006.05 1766.39,1139.55 1882,1206.3 1997.61,1139.55 1997.61,1006.05" fill="none" stroke="#002a5e" stroke-width="3" stroke-linejoin="miter"/>
<polygon points="1882,955.3 1780.24,1014.05 1780.24,1131.55 1882,1190.3 1983.76,1131.55 1983.76,1014.05" fill="none" stroke="#002a5e" stroke-width="3" stroke-linejoin="miter"/>
<polygon points="1882,971.3 1794.1,1022.05 1794.1,1123.55 1882,1174.3 1969.9,1123.55 1969.9,1022.05" fill="none" stroke="#002a5e" stroke-width="3" stroke-linejoin="miter"/>
<polygon points="1882,987.3 1807.95,1030.05 1807.95,1115.55 1882,1158.3 1956.05,1115.55 1956.05,1030.05" fill="none" stroke="#002a5e" stroke-width="3" stroke-linejoin="miter"/>
<polygon points="1882,1003.3 1821.81,1038.05 1821.81,1107.55 1882,1142.3 1942.19,1107.55 1942.19,1038.05" fill="none" stroke="#002a5e" stroke-width="3" stroke-linejoin="miter"/>
<polygon points="1882,1019.3 1835.67,1046.05 1835.67,1099.55 1882,1126.3 1928.33,1099.55 1928.33,1046.05" fill="none" stroke="#002a5e" stroke-width="3" stroke-linejoin="miter"/>
<polygon points="1882,1035.3 1849.52,1054.05 1849.52,1091.55 1882,1110.3 1914.48,1091.55 1914.48,1054.05" fill="none" stroke="#002a5e" stroke-width="3" stroke-linejoin="miter"/>
<polygon points="2358,1072.8 2283,942.9 2133,942.9 2058,1072.8 2133,1202.7 2283,1202.7" fill="none" stroke="#002a5e" stroke-width="1.6" stroke-linejoin="miter"/>
<rect x="2170.5" y="1035.3" width="75" height="75" fill="#ffc64a" transform="rotate(0 2208 1072.8)"/>
<rect x="2266" y="1055.8" width="34" height="34" fill="#002a5e" transform="rotate(0 2283 1072.8)"/><rect x="2228.5" y="990.85" width="34" height="34" fill="#002a5e" transform="rotate(-60 2245.5 1007.85)"/><rect x="2153.5" y="990.85" width="34" height="34" fill="#002a5e" transform="rotate(-120 2170.5 1007.85)"/><rect x="2116" y="1055.8" width="34" height="34" fill="#002a5e" transform="rotate(-180 2133 1072.8)"/><rect x="2153.5" y="1120.75" width="34" height="34" fill="#002a5e" transform="rotate(-240 2170.5 1137.75)"/><rect x="2228.5" y="1120.75" width="34" height="34" fill="#002a5e" transform="rotate(-300 2245.5 1137.75)"/>
<polygon points="2682,1072.8 2608,944.63 2460,944.63 2386,1072.8 2460,1200.97 2608,1200.97" fill="none" stroke="#ffc64a" stroke-width="1.5" stroke-linejoin="miter"/>
<circle cx="2615" cy="1072.8" r="70" fill="none" stroke="#002a5e" stroke-width="1.8"/><circle cx="2574.5" cy="1002.65" r="70" fill="none" stroke="#002a5e" stroke-width="1.8"/><circle cx="2493.5" cy="1002.65" r="70" fill="none" stroke="#002a5e" stroke-width="1.8"/><circle cx="2453" cy="1072.8" r="70" fill="none" stroke="#002a5e" stroke-width="1.8"/><circle cx="2493.5" cy="1142.95" r="70" fill="none" stroke="#002a5e" stroke-width="1.8"/><circle cx="2574.5" cy="1142.95" r="70" fill="none" stroke="#002a5e" stroke-width="1.8"/>
<circle cx="2627.5" cy="1072.8" r="18.5" fill="none" stroke="#002a5e" stroke-width="1.8"/><circle cx="2580.75" cy="991.83" r="18.5" fill="none" stroke="#002a5e" stroke-width="1.8"/><circle cx="2487.25" cy="991.83" r="18.5" fill="none" stroke="#002a5e" stroke-width="1.8"/><circle cx="2440.5" cy="1072.8" r="18.5" fill="none" stroke="#002a5e" stroke-width="1.8"/><circle cx="2487.25" cy="1153.77" r="18.5" fill="none" stroke="#002a5e" stroke-width="1.8"/><circle cx="2580.75" cy="1153.77" r="18.5" fill="none" stroke="#002a5e" stroke-width="1.8"/>
<circle cx="2598.09" cy="1035.8" r="2.5" fill="#002a5e"/><circle cx="2534" cy="998.8" r="2.5" fill="#002a5e"/><circle cx="2469.91" cy="1035.8" r="2.5" fill="#002a5e"/><circle cx="2469.91" cy="1109.8" r="2.5" fill="#002a5e"/><circle cx="2534" cy="1146.8" r="2.5" fill="#002a5e"/><circle cx="2598.09" cy="1109.8" r="2.5" fill="#002a5e"/>
<circle cx="2941" cy="1072.8" r="70" fill="none" stroke="#ffc64a" stroke-width="1.6"/><circle cx="2900.5" cy="1002.65" r="70" fill="none" stroke="#ffc64a" stroke-width="1.6"/><circle cx="2819.5" cy="1002.65" r="70" fill="none" stroke="#ffc64a" stroke-width="1.6"/><circle cx="2779" cy="1072.8" r="70" fill="none" stroke="#ffc64a" stroke-width="1.6"/><circle cx="2819.5" cy="1142.95" r="70" fill="none" stroke="#ffc64a" stroke-width="1.6"/><circle cx="2900.5" cy="1142.95" r="70" fill="none" stroke="#ffc64a" stroke-width="1.6"/>
<rect x="2873.84" y="1062.05" width="3.5" height="3.5" fill="#ffc64a" transform="rotate(-30 2875.59 1063.8)"/><rect x="2858.25" y="1053.05" width="3.5" height="3.5" fill="#ffc64a" transform="rotate(-90 2860 1054.8)"/><rect x="2842.66" y="1062.05" width="3.5" height="3.5" fill="#ffc64a" transform="rotate(-150 2844.41 1063.8)"/><rect x="2842.66" y="1080.05" width="3.5" height="3.5" fill="#ffc64a" transform="rotate(-210 2844.41 1081.8)"/><rect x="2858.25" y="1089.05" width="3.5" height="3.5" fill="#ffc64a" transform="rotate(-270 2860 1090.8)"/><rect x="2873.84" y="1080.05" width="3.5" height="3.5" fill="#ffc64a" transform="rotate(-330 2875.59 1081.8)"/>
<polygon points="3008,1072.8 2934,944.63 2786,944.63 2712,1072.8 2786,1200.97 2934,1200.97" fill="none" stroke="#002a5e" stroke-width="1.6" stroke-linejoin="miter"/>
<polygon points="2860,922.8 2730.1,997.8 2730.1,1147.8 2860,1222.8 2989.9,1147.8 2989.9,997.8" fill="none" stroke="#002a5e" stroke-width="1.6" stroke-linejoin="miter"/>
<polygon points="2860,936.8 2742.22,1004.8 2742.22,1140.8 2860,1208.8 2977.78,1140.8 2977.78,1004.8" fill="none" stroke="#002a5e" stroke-width="1.6" stroke-linejoin="miter"/>
<polygon points="2860,948 2751.92,1010.4 2751.92,1135.2 2860,1197.6 2968.08,1135.2 2968.08,1010.4" fill="none" stroke="#002a5e" stroke-width="1.6" stroke-linejoin="miter"/>
<polygon points="2860,959.2 2761.62,1016 2761.62,1129.6 2860,1186.4 2958.38,1129.6 2958.38,1016" fill="none" stroke="#002a5e" stroke-width="1.6" stroke-linejoin="miter"/>
<polygon points="2860,970.4 2771.32,1021.6 2771.32,1124 2860,1175.2 2948.68,1124 2948.68,1021.6" fill="none" stroke="#002a5e" stroke-width="1.6" stroke-linejoin="miter"/>
<polygon points="2860,981.6 2781.02,1027.2 2781.02,1118.4 2860,1164 2938.98,1118.4 2938.98,1027.2" fill="none" stroke="#002a5e" stroke-width="1.6" stroke-linejoin="miter"/>
<polygon points="2860,992.8 2790.72,1032.8 2790.72,1112.8 2860,1152.8 2929.28,1112.8 2929.28,1032.8" fill="none" stroke="#002a5e" stroke-width="1.6" stroke-linejoin="miter"/>
<polygon points="2860,1004 2800.42,1038.4 2800.42,1107.2 2860,1141.6 2919.58,1107.2 2919.58,1038.4" fill="none" stroke="#002a5e" stroke-width="1.6" stroke-linejoin="miter"/>
<polygon points="2860,1015.2 2810.12,1044 2810.12,1101.6 2860,1130.4 2909.88,1101.6 2909.88,1044" fill="none" stroke="#002a5e" stroke-width="1.6" stroke-linejoin="miter"/>
<polygon points="2860,1026.4 2819.82,1049.6 2819.82,1096 2860,1119.2 2900.18,1096 2900.18,1049.6" fill="none" stroke="#002a5e" stroke-width="1.6" stroke-linejoin="miter"/>
<polygon points="2860,1037.6 2829.52,1055.2 2829.52,1090.4 2860,1108 2890.48,1090.4 2890.48,1055.2" fill="none" stroke="#002a5e" stroke-width="1.6" stroke-linejoin="miter"/>
<line x1="2920.62" y1="1037.8" x2="2977.78" y2="1004.8" stroke="#002a5e" stroke-width="1.6" stroke-linecap="butt"/><line x1="2860" y1="1002.8" x2="2860" y2="936.8" stroke="#002a5e" stroke-width="1.6" stroke-linecap="butt"/><line x1="2799.38" y1="1037.8" x2="2742.22" y2="1004.8" stroke="#002a5e" stroke-width="1.6" stroke-linecap="butt"/><line x1="2799.38" y1="1107.8" x2="2742.22" y2="1140.8" stroke="#002a5e" stroke-width="1.6" stroke-linecap="butt"/><line x1="2860" y1="1142.8" x2="2860" y2="1208.8" stroke="#002a5e" stroke-width="1.6" stroke-linecap="butt"/><line x1="2920.62" y1="1107.8" x2="2977.78" y2="1140.8" stroke="#002a5e" stroke-width="1.6" stroke-linecap="butt"/>
<polygon points="2995.7,1072.8 2949.65,1046.21 2949.65,1099.39" fill="#002a5e"/><polygon points="2927.85,955.28 2881.8,981.87 2927.85,1008.45" fill="#002a5e"/><polygon points="2792.15,955.28 2792.15,1008.45 2838.2,981.87" fill="#002a5e"/><polygon points="2724.3,1072.8 2770.35,1099.39 2770.35,1046.21" fill="#002a5e"/><polygon points="2792.15,1190.32 2838.2,1163.73 2792.15,1137.15" fill="#002a5e"/><polygon points="2927.85,1190.32 2927.85,1137.15 2881.8,1163.73" fill="#002a5e"/>
<circle cx="3186" cy="1072.8" r="46" fill="#ffc64a"/>
<rect x="3289" y="1055.8" width="34" height="34" fill="#ffc64a" transform="rotate(0 3306 1072.8)"/><rect x="3229" y="951.88" width="34" height="34" fill="#ffc64a" transform="rotate(-60 3246 968.88)"/><rect x="3109" y="951.88" width="34" height="34" fill="#ffc64a" transform="rotate(-120 3126 968.88)"/><rect x="3049" y="1055.8" width="34" height="34" fill="#ffc64a" transform="rotate(-180 3066 1072.8)"/><rect x="3109" y="1159.72" width="34" height="34" fill="#ffc64a" transform="rotate(-240 3126 1176.72)"/><rect x="3229" y="1159.72" width="34" height="34" fill="#ffc64a" transform="rotate(-300 3246 1176.72)"/>
<polygon points="3336,1072.8 3261,942.9 3111,942.9 3036,1072.8 3111,1202.7 3261,1202.7" fill="none" stroke="#002a5e" stroke-width="1.6" stroke-linejoin="miter"/>
<circle cx="3267" cy="1072.8" r="70" fill="none" stroke="#002a5e" stroke-width="1.6"/><circle cx="3226.5" cy="1002.65" r="70" fill="none" stroke="#002a5e" stroke-width="1.6"/><circle cx="3145.5" cy="1002.65" r="70" fill="none" stroke="#002a5e" stroke-width="1.6"/><circle cx="3105" cy="1072.8" r="70" fill="none" stroke="#002a5e" stroke-width="1.6"/><circle cx="3145.5" cy="1142.95" r="70" fill="none" stroke="#002a5e" stroke-width="1.6"/><circle cx="3226.5" cy="1142.95" r="70" fill="none" stroke="#002a5e" stroke-width="1.6"/>
<polygon points="1882,1322.9 1819.65,1358.9 1819.65,1430.9 1882,1466.9 1944.35,1430.9 1944.35,1358.9" fill="#ffc64a"/>
<rect x="1942" y="1365.9" width="14" height="58" fill="#ffc64a" transform="rotate(0 1949 1394.9)"/>
<rect x="1908.5" y="1307.88" width="14" height="58" fill="#ffc64a" transform="rotate(-60 1915.5 1336.88)"/>
<rect x="1841.5" y="1307.88" width="14" height="58" fill="#ffc64a" transform="rotate(-120 1848.5 1336.88)"/>
<rect x="1808" y="1365.9" width="14" height="58" fill="#ffc64a" transform="rotate(-180 1815 1394.9)"/>
<rect x="1841.5" y="1423.92" width="14" height="58" fill="#ffc64a" transform="rotate(-240 1848.5 1452.92)"/>
<rect x="1908.5" y="1423.92" width="14" height="58" fill="#ffc64a" transform="rotate(-300 1915.5 1452.92)"/>
<circle cx="1963" cy="1394.9" r="70" fill="none" stroke="#ffc64a" stroke-width="2.6"/><circle cx="1922.5" cy="1324.75" r="70" fill="none" stroke="#ffc64a" stroke-width="2.6"/><circle cx="1841.5" cy="1324.75" r="70" fill="none" stroke="#ffc64a" stroke-width="2.6"/><circle cx="1801" cy="1394.9" r="70" fill="none" stroke="#ffc64a" stroke-width="2.6"/><circle cx="1841.5" cy="1465.05" r="70" fill="none" stroke="#ffc64a" stroke-width="2.6"/><circle cx="1922.5" cy="1465.05" r="70" fill="none" stroke="#ffc64a" stroke-width="2.6"/>
<rect x="1980" y="1392.9" width="4" height="4" fill="#ffc64a" transform="rotate(-0 1982 1394.9)"/><rect x="1998" y="1392.9" width="4" height="4" fill="#ffc64a" transform="rotate(-0 2000 1394.9)"/><rect x="2015" y="1392.9" width="4" height="4" fill="#ffc64a" transform="rotate(-0 2017 1394.9)"/><rect x="1930" y="1306.3" width="4" height="4" fill="#ffc64a" transform="rotate(-60 1932 1308.3)"/><rect x="1939" y="1290.71" width="4" height="4" fill="#ffc64a" transform="rotate(-60 1941 1292.71)"/><rect x="1947.5" y="1275.99" width="4" height="4" fill="#ffc64a" transform="rotate(-60 1949.5 1277.99)"/><rect x="1830" y="1306.3" width="4" height="4" fill="#ffc64a" transform="rotate(-120 1832 1308.3)"/><rect x="1821" y="1290.71" width="4" height="4" fill="#ffc64a" transform="rotate(-120 1823 1292.71)"/><rect x="1812.5" y="1275.99" width="4" height="4" fill="#ffc64a" transform="rotate(-120 1814.5 1277.99)"/><rect x="1780" y="1392.9" width="4" height="4" fill="#ffc64a" transform="rotate(-180 1782 1394.9)"/><rect x="1762" y="1392.9" width="4" height="4" fill="#ffc64a" transform="rotate(-180 1764 1394.9)"/><rect x="1745" y="1392.9" width="4" height="4" fill="#ffc64a" transform="rotate(-180 1747 1394.9)"/><rect x="1830" y="1479.5" width="4" height="4" fill="#ffc64a" transform="rotate(-240 1832 1481.5)"/><rect x="1821" y="1495.09" width="4" height="4" fill="#ffc64a" transform="rotate(-240 1823 1497.09)"/><rect x="1812.5" y="1509.81" width="4" height="4" fill="#ffc64a" transform="rotate(-240 1814.5 1511.81)"/><rect x="1930" y="1479.5" width="4" height="4" fill="#ffc64a" transform="rotate(-300 1932 1481.5)"/><rect x="1939" y="1495.09" width="4" height="4" fill="#ffc64a" transform="rotate(-300 1941 1497.09)"/><rect x="1947.5" y="1509.81" width="4" height="4" fill="#ffc64a" transform="rotate(-300 1949.5 1511.81)"/>
<polygon points="2030,1394.9 1956,1266.73 1808,1266.73 1734,1394.9 1808,1523.07 1956,1523.07" fill="none" stroke="#002a5e" stroke-width="3" stroke-linejoin="miter"/>
<polygon points="1882,1245.4 1752.53,1320.15 1752.53,1469.65 1882,1544.4 2011.47,1469.65 2011.47,1320.15" fill="none" stroke="#002a5e" stroke-width="3" stroke-linejoin="miter"/>
<polygon points="1882,1261.4 1766.39,1328.15 1766.39,1461.65 1882,1528.4 1997.61,1461.65 1997.61,1328.15" fill="none" stroke="#002a5e" stroke-width="3" stroke-linejoin="miter"/>
<polygon points="1882,1277.4 1780.24,1336.15 1780.24,1453.65 1882,1512.4 1983.76,1453.65 1983.76,1336.15" fill="none" stroke="#002a5e" stroke-width="3" stroke-linejoin="miter"/>
<polygon points="1882,1293.4 1794.1,1344.15 1794.1,1445.65 1882,1496.4 1969.9,1445.65 1969.9,1344.15" fill="none" stroke="#002a5e" stroke-width="3" stroke-linejoin="miter"/>
<polygon points="1882,1309.4 1807.95,1352.15 1807.95,1437.65 1882,1480.4 1956.05,1437.65 1956.05,1352.15" fill="none" stroke="#002a5e" stroke-width="3" stroke-linejoin="miter"/>
<polygon points="1882,1325.4 1821.81,1360.15 1821.81,1429.65 1882,1464.4 1942.19,1429.65 1942.19,1360.15" fill="none" stroke="#002a5e" stroke-width="3" stroke-linejoin="miter"/>
<polygon points="1882,1341.4 1835.67,1368.15 1835.67,1421.65 1882,1448.4 1928.33,1421.65 1928.33,1368.15" fill="none" stroke="#002a5e" stroke-width="3" stroke-linejoin="miter"/>
<polygon points="1882,1357.4 1849.52,1376.15 1849.52,1413.65 1882,1432.4 1914.48,1413.65 1914.48,1376.15" fill="none" stroke="#002a5e" stroke-width="3" stroke-linejoin="miter"/>
<line x1="1959" y1="1394.9" x2="1985" y2="1394.9" stroke="#002a5e" stroke-width="3" stroke-linecap="butt"/><line x1="1920.5" y1="1328.22" x2="1933.5" y2="1305.7" stroke="#002a5e" stroke-width="3" stroke-linecap="butt"/><line x1="1843.5" y1="1328.22" x2="1830.5" y2="1305.7" stroke="#002a5e" stroke-width="3" stroke-linecap="butt"/><line x1="1805" y1="1394.9" x2="1779" y2="1394.9" stroke="#002a5e" stroke-width="3" stroke-linecap="butt"/><line x1="1843.5" y1="1461.58" x2="1830.5" y2="1484.1" stroke="#002a5e" stroke-width="3" stroke-linecap="butt"/><line x1="1920.5" y1="1461.58" x2="1933.5" y2="1484.1" stroke="#002a5e" stroke-width="3" stroke-linecap="butt"/>
<polygon points="1882,1384.9 1873.34,1389.9 1873.34,1399.9 1882,1404.9 1890.66,1399.9 1890.66,1389.9" fill="#ffffff"/>
<circle cx="2208" cy="1394.9" r="150" fill="none" stroke="#ffc64a" stroke-width="1.6"/>
<circle cx="2289" cy="1394.9" r="70" fill="none" stroke="#002a5e" stroke-width="1.8"/><circle cx="2248.5" cy="1324.75" r="70" fill="none" stroke="#002a5e" stroke-width="1.8"/><circle cx="2167.5" cy="1324.75" r="70" fill="none" stroke="#002a5e" stroke-width="1.8"/><circle cx="2127" cy="1394.9" r="70" fill="none" stroke="#002a5e" stroke-width="1.8"/><circle cx="2167.5" cy="1465.05" r="70" fill="none" stroke="#002a5e" stroke-width="1.8"/><circle cx="2248.5" cy="1465.05" r="70" fill="none" stroke="#002a5e" stroke-width="1.8"/>
<rect x="2250.75" y="1392.65" width="4.5" height="4.5" fill="#002a5e" transform="rotate(-0 2253 1394.9)"/><rect x="2265.75" y="1392.65" width="4.5" height="4.5" fill="#002a5e" transform="rotate(-0 2268 1394.9)"/><rect x="2280.75" y="1392.65" width="4.5" height="4.5" fill="#002a5e" transform="rotate(-0 2283 1394.9)"/><rect x="2295.75" y="1392.65" width="4.5" height="4.5" fill="#002a5e" transform="rotate(-0 2298 1394.9)"/><rect x="2310.75" y="1392.65" width="4.5" height="4.5" fill="#002a5e" transform="rotate(-0 2313 1394.9)"/><rect x="2325.75" y="1392.65" width="4.5" height="4.5" fill="#002a5e" transform="rotate(-0 2328 1394.9)"/><rect x="2340.75" y="1392.65" width="4.5" height="4.5" fill="#002a5e" transform="rotate(-0 2343 1394.9)"/><rect x="2228.25" y="1353.68" width="4.5" height="4.5" fill="#002a5e" transform="rotate(-60 2230.5 1355.93)"/><rect x="2235.75" y="1340.69" width="4.5" height="4.5" fill="#002a5e" transform="rotate(-60 2238 1342.94)"/><rect x="2243.25" y="1327.7" width="4.5" height="4.5" fill="#002a5e" transform="rotate(-60 2245.5 1329.95)"/><rect x="2250.75" y="1314.71" width="4.5" height="4.5" fill="#002a5e" transform="rotate(-60 2253 1316.96)"/><rect x="2258.25" y="1301.72" width="4.5" height="4.5" fill="#002a5e" transform="rotate(-60 2260.5 1303.97)"/><rect x="2265.75" y="1288.73" width="4.5" height="4.5" fill="#002a5e" transform="rotate(-60 2268 1290.98)"/><rect x="2273.25" y="1275.74" width="4.5" height="4.5" fill="#002a5e" transform="rotate(-60 2275.5 1277.99)"/><rect x="2183.25" y="1353.68" width="4.5" height="4.5" fill="#002a5e" transform="rotate(-120 2185.5 1355.93)"/><rect x="2175.75" y="1340.69" width="4.5" height="4.5" fill="#002a5e" transform="rotate(-120 2178 1342.94)"/><rect x="2168.25" y="1327.7" width="4.5" height="4.5" fill="#002a5e" transform="rotate(-120 2170.5 1329.95)"/><rect x="2160.75" y="1314.71" width="4.5" height="4.5" fill="#002a5e" transform="rotate(-120 2163 1316.96)"/><rect x="2153.25" y="1301.72" width="4.5" height="4.5" fill="#002a5e" transform="rotate(-120 2155.5 1303.97)"/><rect x="2145.75" y="1288.73" width="4.5" height="4.5" fill="#002a5e" transform="rotate(-120 2148 1290.98)"/><rect x="2138.25" y="1275.74" width="4.5" height="4.5" fill="#002a5e" transform="rotate(-120 2140.5 1277.99)"/><rect x="2160.75" y="1392.65" width="4.5" height="4.5" fill="#002a5e" transform="rotate(-180 2163 1394.9)"/><rect x="2145.75" y="1392.65" width="4.5" height="4.5" fill="#002a5e" transform="rotate(-180 2148 1394.9)"/><rect x="2130.75" y="1392.65" width="4.5" height="4.5" fill="#002a5e" transform="rotate(-180 2133 1394.9)"/><rect x="2115.75" y="1392.65" width="4.5" height="4.5" fill="#002a5e" transform="rotate(-180 2118 1394.9)"/><rect x="2100.75" y="1392.65" width="4.5" height="4.5" fill="#002a5e" transform="rotate(-180 2103 1394.9)"/><rect x="2085.75" y="1392.65" width="4.5" height="4.5" fill="#002a5e" transform="rotate(-180 2088 1394.9)"/><rect x="2070.75" y="1392.65" width="4.5" height="4.5" fill="#002a5e" transform="rotate(-180 2073 1394.9)"/><rect x="2183.25" y="1431.62" width="4.5" height="4.5" fill="#002a5e" transform="rotate(-240 2185.5 1433.87)"/><rect x="2175.75" y="1444.61" width="4.5" height="4.5" fill="#002a5e" transform="rotate(-240 2178 1446.86)"/><rect x="2168.25" y="1457.6" width="4.5" height="4.5" fill="#002a5e" transform="rotate(-240 2170.5 1459.85)"/><rect x="2160.75" y="1470.59" width="4.5" height="4.5" fill="#002a5e" transform="rotate(-240 2163 1472.84)"/><rect x="2153.25" y="1483.58" width="4.5" height="4.5" fill="#002a5e" transform="rotate(-240 2155.5 1485.83)"/><rect x="2145.75" y="1496.57" width="4.5" height="4.5" fill="#002a5e" transform="rotate(-240 2148 1498.82)"/><rect x="2138.25" y="1509.56" width="4.5" height="4.5" fill="#002a5e" transform="rotate(-240 2140.5 1511.81)"/><rect x="2228.25" y="1431.62" width="4.5" height="4.5" fill="#002a5e" transform="rotate(-300 2230.5 1433.87)"/><rect x="2235.75" y="1444.61" width="4.5" height="4.5" fill="#002a5e" transform="rotate(-300 2238 1446.86)"/><rect x="2243.25" y="1457.6" width="4.5" height="4.5" fill="#002a5e" transform="rotate(-300 2245.5 1459.85)"/><rect x="2250.75" y="1470.59" width="4.5" height="4.5" fill="#002a5e" transform="rotate(-300 2253 1472.84)"/><rect x="2258.25" y="1483.58" width="4.5" height="4.5" fill="#002a5e" transform="rotate(-300 2260.5 1485.83)"/><rect x="2265.75" y="1496.57" width="4.5" height="4.5" fill="#002a5e" transform="rotate(-300 2268 1498.82)"/><rect x="2273.25" y="1509.56" width="4.5" height="4.5" fill="#002a5e" transform="rotate(-300 2275.5 1511.81)"/>
<rect x="2170.5" y="1357.4" width="75" height="75" fill="#002a5e" transform="rotate(0 2208 1394.9)"/>
<circle cx="2534" cy="1394.9" r="150" fill="none" stroke="#ffc64a" stroke-width="3.2"/>
<line x1="2572.11" y1="1372.9" x2="2611.94" y2="1349.9" stroke="#ffc64a" stroke-width="1.8" stroke-linecap="butt"/><line x1="2534" y1="1350.9" x2="2534" y2="1304.9" stroke="#ffc64a" stroke-width="1.8" stroke-linecap="butt"/><line x1="2495.89" y1="1372.9" x2="2456.06" y2="1349.9" stroke="#ffc64a" stroke-width="1.8" stroke-linecap="butt"/><line x1="2495.89" y1="1416.9" x2="2456.06" y2="1439.9" stroke="#ffc64a" stroke-width="1.8" stroke-linecap="butt"/><line x1="2534" y1="1438.9" x2="2534" y2="1484.9" stroke="#ffc64a" stroke-width="1.8" stroke-linecap="butt"/><line x1="2572.11" y1="1416.9" x2="2611.94" y2="1439.9" stroke="#ffc64a" stroke-width="1.8" stroke-linecap="butt"/>
<line x1="2578" y1="1394.9" x2="2627.5" y2="1394.9" stroke="#ffc64a" stroke-width="1.4" stroke-linecap="butt"/><line x1="2556" y1="1356.79" x2="2580.75" y2="1313.93" stroke="#ffc64a" stroke-width="1.4" stroke-linecap="butt"/><line x1="2512" y1="1356.79" x2="2487.25" y2="1313.93" stroke="#ffc64a" stroke-width="1.4" stroke-linecap="butt"/><line x1="2490" y1="1394.9" x2="2440.5" y2="1394.9" stroke="#ffc64a" stroke-width="1.4" stroke-linecap="butt"/><line x1="2512" y1="1433.01" x2="2487.25" y2="1475.87" stroke="#ffc64a" stroke-width="1.4" stroke-linecap="butt"/><line x1="2556" y1="1433.01" x2="2580.75" y2="1475.87" stroke="#ffc64a" stroke-width="1.4" stroke-linecap="butt"/>
<rect x="2550.75" y="1392.9" width="4" height="4" fill="#ffc64a" transform="rotate(-0 2552.75 1394.9)"/><rect x="2569.5" y="1392.9" width="4" height="4" fill="#ffc64a" transform="rotate(-0 2571.5 1394.9)"/><rect x="2588.25" y="1392.9" width="4" height="4" fill="#ffc64a" transform="rotate(-0 2590.25 1394.9)"/><rect x="2607" y="1392.9" width="4" height="4" fill="#ffc64a" transform="rotate(-0 2609 1394.9)"/><rect x="2625.75" y="1392.9" width="4" height="4" fill="#ffc64a" transform="rotate(-0 2627.75 1394.9)"/><rect x="2644.5" y="1392.9" width="4" height="4" fill="#ffc64a" transform="rotate(-0 2646.5 1394.9)"/><rect x="2663.25" y="1392.9" width="4" height="4" fill="#ffc64a" transform="rotate(-0 2665.25 1394.9)"/><rect x="2541.38" y="1376.66" width="4" height="4" fill="#ffc64a" transform="rotate(-60 2543.38 1378.66)"/><rect x="2550.75" y="1360.42" width="4" height="4" fill="#ffc64a" transform="rotate(-60 2552.75 1362.42)"/><rect x="2560.12" y="1344.19" width="4" height="4" fill="#ffc64a" transform="rotate(-60 2562.12 1346.19)"/><rect x="2569.5" y="1327.95" width="4" height="4" fill="#ffc64a" transform="rotate(-60 2571.5 1329.95)"/><rect x="2578.88" y="1311.71" width="4" height="4" fill="#ffc64a" transform="rotate(-60 2580.88 1313.71)"/><rect x="2588.25" y="1295.47" width="4" height="4" fill="#ffc64a" transform="rotate(-60 2590.25 1297.47)"/><rect x="2597.62" y="1279.23" width="4" height="4" fill="#ffc64a" transform="rotate(-60 2599.62 1281.23)"/><rect x="2522.62" y="1376.66" width="4" height="4" fill="#ffc64a" transform="rotate(-120 2524.62 1378.66)"/><rect x="2513.25" y="1360.42" width="4" height="4" fill="#ffc64a" transform="rotate(-120 2515.25 1362.42)"/><rect x="2503.88" y="1344.19" width="4" height="4" fill="#ffc64a" transform="rotate(-120 2505.88 1346.19)"/><rect x="2494.5" y="1327.95" width="4" height="4" fill="#ffc64a" transform="rotate(-120 2496.5 1329.95)"/><rect x="2485.12" y="1311.71" width="4" height="4" fill="#ffc64a" transform="rotate(-120 2487.12 1313.71)"/><rect x="2475.75" y="1295.47" width="4" height="4" fill="#ffc64a" transform="rotate(-120 2477.75 1297.47)"/><rect x="2466.38" y="1279.23" width="4" height="4" fill="#ffc64a" transform="rotate(-120 2468.38 1281.23)"/><rect x="2513.25" y="1392.9" width="4" height="4" fill="#ffc64a" transform="rotate(-180 2515.25 1394.9)"/><rect x="2494.5" y="1392.9" width="4" height="4" fill="#ffc64a" transform="rotate(-180 2496.5 1394.9)"/><rect x="2475.75" y="1392.9" width="4" height="4" fill="#ffc64a" transform="rotate(-180 2477.75 1394.9)"/><rect x="2457" y="1392.9" width="4" height="4" fill="#ffc64a" transform="rotate(-180 2459 1394.9)"/><rect x="2438.25" y="1392.9" width="4" height="4" fill="#ffc64a" transform="rotate(-180 2440.25 1394.9)"/><rect x="2419.5" y="1392.9" width="4" height="4" fill="#ffc64a" transform="rotate(-180 2421.5 1394.9)"/><rect x="2400.75" y="1392.9" width="4" height="4" fill="#ffc64a" transform="rotate(-180 2402.75 1394.9)"/><rect x="2522.62" y="1409.14" width="4" height="4" fill="#ffc64a" transform="rotate(-240 2524.62 1411.14)"/><rect x="2513.25" y="1425.38" width="4" height="4" fill="#ffc64a" transform="rotate(-240 2515.25 1427.38)"/><rect x="2503.88" y="1441.61" width="4" height="4" fill="#ffc64a" transform="rotate(-240 2505.88 1443.61)"/><rect x="2494.5" y="1457.85" width="4" height="4" fill="#ffc64a" transform="rotate(-240 2496.5 1459.85)"/><rect x="2485.12" y="1474.09" width="4" height="4" fill="#ffc64a" transform="rotate(-240 2487.12 1476.09)"/><rect x="2475.75" y="1490.33" width="4" height="4" fill="#ffc64a" transform="rotate(-240 2477.75 1492.33)"/><rect x="2466.38" y="1506.57" width="4" height="4" fill="#ffc64a" transform="rotate(-240 2468.38 1508.57)"/><rect x="2541.38" y="1409.14" width="4" height="4" fill="#ffc64a" transform="rotate(-300 2543.38 1411.14)"/><rect x="2550.75" y="1425.38" width="4" height="4" fill="#ffc64a" transform="rotate(-300 2552.75 1427.38)"/><rect x="2560.12" y="1441.61" width="4" height="4" fill="#ffc64a" transform="rotate(-300 2562.12 1443.61)"/><rect x="2569.5" y="1457.85" width="4" height="4" fill="#ffc64a" transform="rotate(-300 2571.5 1459.85)"/><rect x="2578.88" y="1474.09" width="4" height="4" fill="#ffc64a" transform="rotate(-300 2580.88 1476.09)"/><rect x="2588.25" y="1490.33" width="4" height="4" fill="#ffc64a" transform="rotate(-300 2590.25 1492.33)"/><rect x="2597.62" y="1506.57" width="4" height="4" fill="#ffc64a" transform="rotate(-300 2599.62 1508.57)"/>
<rect x="2807.5" y="1342.4" width="105" height="105" fill="#ffc64a" transform="rotate(0 2860 1394.9)"/>
<rect x="2952.7" y="1375.2" width="39.4" height="39.4" fill="#002a5e" transform="rotate(0 2972.4 1394.9)"/><rect x="2896.5" y="1277.86" width="39.4" height="39.4" fill="#002a5e" transform="rotate(-60 2916.2 1297.56)"/><rect x="2784.1" y="1277.86" width="39.4" height="39.4" fill="#002a5e" transform="rotate(-120 2803.8 1297.56)"/><rect x="2727.9" y="1375.2" width="39.4" height="39.4" fill="#002a5e" transform="rotate(-180 2747.6 1394.9)"/><rect x="2784.1" y="1472.54" width="39.4" height="39.4" fill="#002a5e" transform="rotate(-240 2803.8 1492.24)"/><rect x="2896.5" y="1472.54" width="39.4" height="39.4" fill="#002a5e" transform="rotate(-300 2916.2 1492.24)"/>
<circle cx="3261" cy="1394.9" r="16.3" fill="#ffc64a"/><circle cx="3223.5" cy="1329.95" r="16.3" fill="#ffc64a"/><circle cx="3148.5" cy="1329.95" r="16.3" fill="#ffc64a"/><circle cx="3111" cy="1394.9" r="16.3" fill="#ffc64a"/><circle cx="3148.5" cy="1459.85" r="16.3" fill="#ffc64a"/><circle cx="3223.5" cy="1459.85" r="16.3" fill="#ffc64a"/>
<polygon points="3186,1246.3 3057.31,1320.6 3057.31,1469.2 3186,1543.5 3314.69,1469.2 3314.69,1320.6" fill="none" stroke="#002a5e" stroke-width="1.6" stroke-linejoin="miter"/>
<polygon points="3186,1259.05 3068.35,1326.98 3068.35,1462.83 3186,1530.75 3303.65,1462.83 3303.65,1326.98" fill="none" stroke="#002a5e" stroke-width="1.6" stroke-linejoin="miter"/>
<polygon points="3186,1271.8 3079.39,1333.35 3079.39,1456.45 3186,1518 3292.61,1456.45 3292.61,1333.35" fill="none" stroke="#002a5e" stroke-width="1.6" stroke-linejoin="miter"/>
<polygon points="3186,1284.55 3090.43,1339.73 3090.43,1450.08 3186,1505.25 3281.57,1450.08 3281.57,1339.73" fill="none" stroke="#002a5e" stroke-width="1.6" stroke-linejoin="miter"/>
<polygon points="3186,1297.3 3101.48,1346.1 3101.48,1443.7 3186,1492.5 3270.52,1443.7 3270.52,1346.1" fill="none" stroke="#002a5e" stroke-width="1.6" stroke-linejoin="miter"/>
<polygon points="3186,1310.05 3112.52,1352.48 3112.52,1437.33 3186,1479.75 3259.48,1437.33 3259.48,1352.48" fill="none" stroke="#002a5e" stroke-width="1.6" stroke-linejoin="miter"/>
<polygon points="3186,1322.8 3123.56,1358.85 3123.56,1430.95 3186,1467 3248.44,1430.95 3248.44,1358.85" fill="none" stroke="#002a5e" stroke-width="1.6" stroke-linejoin="miter"/>
<polygon points="3186,1335.55 3134.6,1365.23 3134.6,1424.58 3186,1454.25 3237.4,1424.58 3237.4,1365.23" fill="none" stroke="#002a5e" stroke-width="1.6" stroke-linejoin="miter"/>
<polygon points="3186,1348.3 3145.64,1371.6 3145.64,1418.2 3186,1441.5 3226.36,1418.2 3226.36,1371.6" fill="none" stroke="#002a5e" stroke-width="1.6" stroke-linejoin="miter"/>
<polygon points="3186,1361.05 3156.69,1377.98 3156.69,1411.83 3186,1428.75 3215.31,1411.83 3215.31,1377.98" fill="none" stroke="#002a5e" stroke-width="1.6" stroke-linejoin="miter"/>
</svg>
</div>
</body></html>
